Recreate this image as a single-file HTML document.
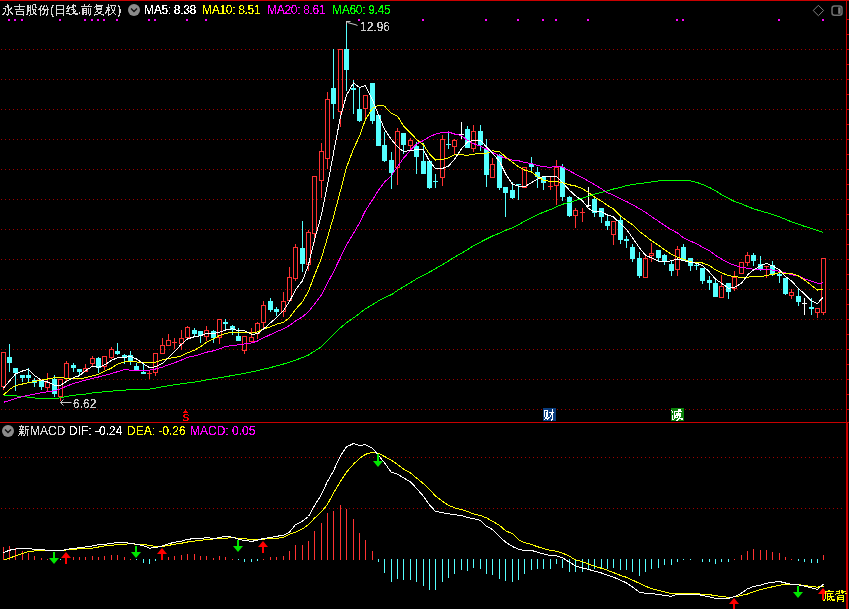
<!DOCTYPE html>
<html><head><meta charset="utf-8">
<style>
html,body{margin:0;padding:0;background:#000;}
body{width:849px;height:609px;overflow:hidden;position:relative;font-family:"Liberation Sans", sans-serif;}
svg{position:absolute;left:0;top:0;}
.t{position:absolute;white-space:pre;font-size:12px;line-height:20px;filter:url(#crisp);}
</style></head><body>
<svg width="849" height="609" viewBox="0 0 849 609" shape-rendering="crispEdges">
<defs><filter id="crisp" x="0" y="0" width="100%" height="100%"><feComponentTransfer><feFuncA type="discrete" tableValues="0 0 1 1 1"/></feComponentTransfer></filter><filter id="crispc" x="0" y="0" width="100%" height="100%"><feComponentTransfer><feFuncA type="discrete" tableValues="0 0 1 1 1"/></feComponentTransfer></filter></defs>
<path d="M1 49h1v1h-1zM5 49h1v1h-1zM9 49h1v1h-1zM13 49h1v1h-1zM17 49h1v1h-1zM21 49h1v1h-1zM25 49h1v1h-1zM29 49h1v1h-1zM33 49h1v1h-1zM37 49h1v1h-1zM41 49h1v1h-1zM45 49h1v1h-1zM49 49h1v1h-1zM53 49h1v1h-1zM57 49h1v1h-1zM61 49h1v1h-1zM65 49h1v1h-1zM69 49h1v1h-1zM73 49h1v1h-1zM77 49h1v1h-1zM81 49h1v1h-1zM85 49h1v1h-1zM89 49h1v1h-1zM93 49h1v1h-1zM97 49h1v1h-1zM101 49h1v1h-1zM105 49h1v1h-1zM109 49h1v1h-1zM113 49h1v1h-1zM117 49h1v1h-1zM121 49h1v1h-1zM125 49h1v1h-1zM129 49h1v1h-1zM133 49h1v1h-1zM137 49h1v1h-1zM141 49h1v1h-1zM145 49h1v1h-1zM149 49h1v1h-1zM153 49h1v1h-1zM157 49h1v1h-1zM161 49h1v1h-1zM165 49h1v1h-1zM169 49h1v1h-1zM173 49h1v1h-1zM177 49h1v1h-1zM181 49h1v1h-1zM185 49h1v1h-1zM189 49h1v1h-1zM193 49h1v1h-1zM197 49h1v1h-1zM201 49h1v1h-1zM205 49h1v1h-1zM209 49h1v1h-1zM213 49h1v1h-1zM217 49h1v1h-1zM221 49h1v1h-1zM225 49h1v1h-1zM229 49h1v1h-1zM233 49h1v1h-1zM237 49h1v1h-1zM241 49h1v1h-1zM245 49h1v1h-1zM249 49h1v1h-1zM253 49h1v1h-1zM257 49h1v1h-1zM261 49h1v1h-1zM265 49h1v1h-1zM269 49h1v1h-1zM273 49h1v1h-1zM277 49h1v1h-1zM281 49h1v1h-1zM285 49h1v1h-1zM289 49h1v1h-1zM293 49h1v1h-1zM297 49h1v1h-1zM301 49h1v1h-1zM305 49h1v1h-1zM309 49h1v1h-1zM313 49h1v1h-1zM317 49h1v1h-1zM321 49h1v1h-1zM325 49h1v1h-1zM329 49h1v1h-1zM333 49h1v1h-1zM337 49h1v1h-1zM341 49h1v1h-1zM345 49h1v1h-1zM349 49h1v1h-1zM353 49h1v1h-1zM357 49h1v1h-1zM361 49h1v1h-1zM365 49h1v1h-1zM369 49h1v1h-1zM373 49h1v1h-1zM377 49h1v1h-1zM381 49h1v1h-1zM385 49h1v1h-1zM389 49h1v1h-1zM393 49h1v1h-1zM397 49h1v1h-1zM401 49h1v1h-1zM405 49h1v1h-1zM409 49h1v1h-1zM413 49h1v1h-1zM417 49h1v1h-1zM421 49h1v1h-1zM425 49h1v1h-1zM429 49h1v1h-1zM433 49h1v1h-1zM437 49h1v1h-1zM441 49h1v1h-1zM445 49h1v1h-1zM449 49h1v1h-1zM453 49h1v1h-1zM457 49h1v1h-1zM461 49h1v1h-1zM465 49h1v1h-1zM469 49h1v1h-1zM473 49h1v1h-1zM477 49h1v1h-1zM481 49h1v1h-1zM485 49h1v1h-1zM489 49h1v1h-1zM493 49h1v1h-1zM497 49h1v1h-1zM501 49h1v1h-1zM505 49h1v1h-1zM509 49h1v1h-1zM513 49h1v1h-1zM517 49h1v1h-1zM521 49h1v1h-1zM525 49h1v1h-1zM529 49h1v1h-1zM533 49h1v1h-1zM537 49h1v1h-1zM541 49h1v1h-1zM545 49h1v1h-1zM549 49h1v1h-1zM553 49h1v1h-1zM557 49h1v1h-1zM561 49h1v1h-1zM565 49h1v1h-1zM569 49h1v1h-1zM573 49h1v1h-1zM577 49h1v1h-1zM581 49h1v1h-1zM585 49h1v1h-1zM589 49h1v1h-1zM593 49h1v1h-1zM597 49h1v1h-1zM601 49h1v1h-1zM605 49h1v1h-1zM609 49h1v1h-1zM613 49h1v1h-1zM617 49h1v1h-1zM621 49h1v1h-1zM625 49h1v1h-1zM629 49h1v1h-1zM633 49h1v1h-1zM637 49h1v1h-1zM641 49h1v1h-1zM645 49h1v1h-1zM649 49h1v1h-1zM653 49h1v1h-1zM657 49h1v1h-1zM661 49h1v1h-1zM665 49h1v1h-1zM669 49h1v1h-1zM673 49h1v1h-1zM677 49h1v1h-1zM681 49h1v1h-1zM685 49h1v1h-1zM689 49h1v1h-1zM693 49h1v1h-1zM697 49h1v1h-1zM701 49h1v1h-1zM705 49h1v1h-1zM709 49h1v1h-1zM713 49h1v1h-1zM717 49h1v1h-1zM721 49h1v1h-1zM725 49h1v1h-1zM729 49h1v1h-1zM733 49h1v1h-1zM737 49h1v1h-1zM741 49h1v1h-1zM745 49h1v1h-1zM749 49h1v1h-1zM753 49h1v1h-1zM757 49h1v1h-1zM761 49h1v1h-1zM765 49h1v1h-1zM769 49h1v1h-1zM773 49h1v1h-1zM777 49h1v1h-1zM781 49h1v1h-1zM785 49h1v1h-1zM789 49h1v1h-1zM793 49h1v1h-1zM797 49h1v1h-1zM801 49h1v1h-1zM805 49h1v1h-1zM809 49h1v1h-1zM813 49h1v1h-1zM817 49h1v1h-1zM821 49h1v1h-1zM825 49h1v1h-1zM829 49h1v1h-1zM833 49h1v1h-1zM837 49h1v1h-1zM841 49h1v1h-1zM1 79h1v1h-1zM5 79h1v1h-1zM9 79h1v1h-1zM13 79h1v1h-1zM17 79h1v1h-1zM21 79h1v1h-1zM25 79h1v1h-1zM29 79h1v1h-1zM33 79h1v1h-1zM37 79h1v1h-1zM41 79h1v1h-1zM45 79h1v1h-1zM49 79h1v1h-1zM53 79h1v1h-1zM57 79h1v1h-1zM61 79h1v1h-1zM65 79h1v1h-1zM69 79h1v1h-1zM73 79h1v1h-1zM77 79h1v1h-1zM81 79h1v1h-1zM85 79h1v1h-1zM89 79h1v1h-1zM93 79h1v1h-1zM97 79h1v1h-1zM101 79h1v1h-1zM105 79h1v1h-1zM109 79h1v1h-1zM113 79h1v1h-1zM117 79h1v1h-1zM121 79h1v1h-1zM125 79h1v1h-1zM129 79h1v1h-1zM133 79h1v1h-1zM137 79h1v1h-1zM141 79h1v1h-1zM145 79h1v1h-1zM149 79h1v1h-1zM153 79h1v1h-1zM157 79h1v1h-1zM161 79h1v1h-1zM165 79h1v1h-1zM169 79h1v1h-1zM173 79h1v1h-1zM177 79h1v1h-1zM181 79h1v1h-1zM185 79h1v1h-1zM189 79h1v1h-1zM193 79h1v1h-1zM197 79h1v1h-1zM201 79h1v1h-1zM205 79h1v1h-1zM209 79h1v1h-1zM213 79h1v1h-1zM217 79h1v1h-1zM221 79h1v1h-1zM225 79h1v1h-1zM229 79h1v1h-1zM233 79h1v1h-1zM237 79h1v1h-1zM241 79h1v1h-1zM245 79h1v1h-1zM249 79h1v1h-1zM253 79h1v1h-1zM257 79h1v1h-1zM261 79h1v1h-1zM265 79h1v1h-1zM269 79h1v1h-1zM273 79h1v1h-1zM277 79h1v1h-1zM281 79h1v1h-1zM285 79h1v1h-1zM289 79h1v1h-1zM293 79h1v1h-1zM297 79h1v1h-1zM301 79h1v1h-1zM305 79h1v1h-1zM309 79h1v1h-1zM313 79h1v1h-1zM317 79h1v1h-1zM321 79h1v1h-1zM325 79h1v1h-1zM329 79h1v1h-1zM333 79h1v1h-1zM337 79h1v1h-1zM341 79h1v1h-1zM345 79h1v1h-1zM349 79h1v1h-1zM353 79h1v1h-1zM357 79h1v1h-1zM361 79h1v1h-1zM365 79h1v1h-1zM369 79h1v1h-1zM373 79h1v1h-1zM377 79h1v1h-1zM381 79h1v1h-1zM385 79h1v1h-1zM389 79h1v1h-1zM393 79h1v1h-1zM397 79h1v1h-1zM401 79h1v1h-1zM405 79h1v1h-1zM409 79h1v1h-1zM413 79h1v1h-1zM417 79h1v1h-1zM421 79h1v1h-1zM425 79h1v1h-1zM429 79h1v1h-1zM433 79h1v1h-1zM437 79h1v1h-1zM441 79h1v1h-1zM445 79h1v1h-1zM449 79h1v1h-1zM453 79h1v1h-1zM457 79h1v1h-1zM461 79h1v1h-1zM465 79h1v1h-1zM469 79h1v1h-1zM473 79h1v1h-1zM477 79h1v1h-1zM481 79h1v1h-1zM485 79h1v1h-1zM489 79h1v1h-1zM493 79h1v1h-1zM497 79h1v1h-1zM501 79h1v1h-1zM505 79h1v1h-1zM509 79h1v1h-1zM513 79h1v1h-1zM517 79h1v1h-1zM521 79h1v1h-1zM525 79h1v1h-1zM529 79h1v1h-1zM533 79h1v1h-1zM537 79h1v1h-1zM541 79h1v1h-1zM545 79h1v1h-1zM549 79h1v1h-1zM553 79h1v1h-1zM557 79h1v1h-1zM561 79h1v1h-1zM565 79h1v1h-1zM569 79h1v1h-1zM573 79h1v1h-1zM577 79h1v1h-1zM581 79h1v1h-1zM585 79h1v1h-1zM589 79h1v1h-1zM593 79h1v1h-1zM597 79h1v1h-1zM601 79h1v1h-1zM605 79h1v1h-1zM609 79h1v1h-1zM613 79h1v1h-1zM617 79h1v1h-1zM621 79h1v1h-1zM625 79h1v1h-1zM629 79h1v1h-1zM633 79h1v1h-1zM637 79h1v1h-1zM641 79h1v1h-1zM645 79h1v1h-1zM649 79h1v1h-1zM653 79h1v1h-1zM657 79h1v1h-1zM661 79h1v1h-1zM665 79h1v1h-1zM669 79h1v1h-1zM673 79h1v1h-1zM677 79h1v1h-1zM681 79h1v1h-1zM685 79h1v1h-1zM689 79h1v1h-1zM693 79h1v1h-1zM697 79h1v1h-1zM701 79h1v1h-1zM705 79h1v1h-1zM709 79h1v1h-1zM713 79h1v1h-1zM717 79h1v1h-1zM721 79h1v1h-1zM725 79h1v1h-1zM729 79h1v1h-1zM733 79h1v1h-1zM737 79h1v1h-1zM741 79h1v1h-1zM745 79h1v1h-1zM749 79h1v1h-1zM753 79h1v1h-1zM757 79h1v1h-1zM761 79h1v1h-1zM765 79h1v1h-1zM769 79h1v1h-1zM773 79h1v1h-1zM777 79h1v1h-1zM781 79h1v1h-1zM785 79h1v1h-1zM789 79h1v1h-1zM793 79h1v1h-1zM797 79h1v1h-1zM801 79h1v1h-1zM805 79h1v1h-1zM809 79h1v1h-1zM813 79h1v1h-1zM817 79h1v1h-1zM821 79h1v1h-1zM825 79h1v1h-1zM829 79h1v1h-1zM833 79h1v1h-1zM837 79h1v1h-1zM841 79h1v1h-1zM1 109h1v1h-1zM5 109h1v1h-1zM9 109h1v1h-1zM13 109h1v1h-1zM17 109h1v1h-1zM21 109h1v1h-1zM25 109h1v1h-1zM29 109h1v1h-1zM33 109h1v1h-1zM37 109h1v1h-1zM41 109h1v1h-1zM45 109h1v1h-1zM49 109h1v1h-1zM53 109h1v1h-1zM57 109h1v1h-1zM61 109h1v1h-1zM65 109h1v1h-1zM69 109h1v1h-1zM73 109h1v1h-1zM77 109h1v1h-1zM81 109h1v1h-1zM85 109h1v1h-1zM89 109h1v1h-1zM93 109h1v1h-1zM97 109h1v1h-1zM101 109h1v1h-1zM105 109h1v1h-1zM109 109h1v1h-1zM113 109h1v1h-1zM117 109h1v1h-1zM121 109h1v1h-1zM125 109h1v1h-1zM129 109h1v1h-1zM133 109h1v1h-1zM137 109h1v1h-1zM141 109h1v1h-1zM145 109h1v1h-1zM149 109h1v1h-1zM153 109h1v1h-1zM157 109h1v1h-1zM161 109h1v1h-1zM165 109h1v1h-1zM169 109h1v1h-1zM173 109h1v1h-1zM177 109h1v1h-1zM181 109h1v1h-1zM185 109h1v1h-1zM189 109h1v1h-1zM193 109h1v1h-1zM197 109h1v1h-1zM201 109h1v1h-1zM205 109h1v1h-1zM209 109h1v1h-1zM213 109h1v1h-1zM217 109h1v1h-1zM221 109h1v1h-1zM225 109h1v1h-1zM229 109h1v1h-1zM233 109h1v1h-1zM237 109h1v1h-1zM241 109h1v1h-1zM245 109h1v1h-1zM249 109h1v1h-1zM253 109h1v1h-1zM257 109h1v1h-1zM261 109h1v1h-1zM265 109h1v1h-1zM269 109h1v1h-1zM273 109h1v1h-1zM277 109h1v1h-1zM281 109h1v1h-1zM285 109h1v1h-1zM289 109h1v1h-1zM293 109h1v1h-1zM297 109h1v1h-1zM301 109h1v1h-1zM305 109h1v1h-1zM309 109h1v1h-1zM313 109h1v1h-1zM317 109h1v1h-1zM321 109h1v1h-1zM325 109h1v1h-1zM329 109h1v1h-1zM333 109h1v1h-1zM337 109h1v1h-1zM341 109h1v1h-1zM345 109h1v1h-1zM349 109h1v1h-1zM353 109h1v1h-1zM357 109h1v1h-1zM361 109h1v1h-1zM365 109h1v1h-1zM369 109h1v1h-1zM373 109h1v1h-1zM377 109h1v1h-1zM381 109h1v1h-1zM385 109h1v1h-1zM389 109h1v1h-1zM393 109h1v1h-1zM397 109h1v1h-1zM401 109h1v1h-1zM405 109h1v1h-1zM409 109h1v1h-1zM413 109h1v1h-1zM417 109h1v1h-1zM421 109h1v1h-1zM425 109h1v1h-1zM429 109h1v1h-1zM433 109h1v1h-1zM437 109h1v1h-1zM441 109h1v1h-1zM445 109h1v1h-1zM449 109h1v1h-1zM453 109h1v1h-1zM457 109h1v1h-1zM461 109h1v1h-1zM465 109h1v1h-1zM469 109h1v1h-1zM473 109h1v1h-1zM477 109h1v1h-1zM481 109h1v1h-1zM485 109h1v1h-1zM489 109h1v1h-1zM493 109h1v1h-1zM497 109h1v1h-1zM501 109h1v1h-1zM505 109h1v1h-1zM509 109h1v1h-1zM513 109h1v1h-1zM517 109h1v1h-1zM521 109h1v1h-1zM525 109h1v1h-1zM529 109h1v1h-1zM533 109h1v1h-1zM537 109h1v1h-1zM541 109h1v1h-1zM545 109h1v1h-1zM549 109h1v1h-1zM553 109h1v1h-1zM557 109h1v1h-1zM561 109h1v1h-1zM565 109h1v1h-1zM569 109h1v1h-1zM573 109h1v1h-1zM577 109h1v1h-1zM581 109h1v1h-1zM585 109h1v1h-1zM589 109h1v1h-1zM593 109h1v1h-1zM597 109h1v1h-1zM601 109h1v1h-1zM605 109h1v1h-1zM609 109h1v1h-1zM613 109h1v1h-1zM617 109h1v1h-1zM621 109h1v1h-1zM625 109h1v1h-1zM629 109h1v1h-1zM633 109h1v1h-1zM637 109h1v1h-1zM641 109h1v1h-1zM645 109h1v1h-1zM649 109h1v1h-1zM653 109h1v1h-1zM657 109h1v1h-1zM661 109h1v1h-1zM665 109h1v1h-1zM669 109h1v1h-1zM673 109h1v1h-1zM677 109h1v1h-1zM681 109h1v1h-1zM685 109h1v1h-1zM689 109h1v1h-1zM693 109h1v1h-1zM697 109h1v1h-1zM701 109h1v1h-1zM705 109h1v1h-1zM709 109h1v1h-1zM713 109h1v1h-1zM717 109h1v1h-1zM721 109h1v1h-1zM725 109h1v1h-1zM729 109h1v1h-1zM733 109h1v1h-1zM737 109h1v1h-1zM741 109h1v1h-1zM745 109h1v1h-1zM749 109h1v1h-1zM753 109h1v1h-1zM757 109h1v1h-1zM761 109h1v1h-1zM765 109h1v1h-1zM769 109h1v1h-1zM773 109h1v1h-1zM777 109h1v1h-1zM781 109h1v1h-1zM785 109h1v1h-1zM789 109h1v1h-1zM793 109h1v1h-1zM797 109h1v1h-1zM801 109h1v1h-1zM805 109h1v1h-1zM809 109h1v1h-1zM813 109h1v1h-1zM817 109h1v1h-1zM821 109h1v1h-1zM825 109h1v1h-1zM829 109h1v1h-1zM833 109h1v1h-1zM837 109h1v1h-1zM841 109h1v1h-1zM1 139h1v1h-1zM5 139h1v1h-1zM9 139h1v1h-1zM13 139h1v1h-1zM17 139h1v1h-1zM21 139h1v1h-1zM25 139h1v1h-1zM29 139h1v1h-1zM33 139h1v1h-1zM37 139h1v1h-1zM41 139h1v1h-1zM45 139h1v1h-1zM49 139h1v1h-1zM53 139h1v1h-1zM57 139h1v1h-1zM61 139h1v1h-1zM65 139h1v1h-1zM69 139h1v1h-1zM73 139h1v1h-1zM77 139h1v1h-1zM81 139h1v1h-1zM85 139h1v1h-1zM89 139h1v1h-1zM93 139h1v1h-1zM97 139h1v1h-1zM101 139h1v1h-1zM105 139h1v1h-1zM109 139h1v1h-1zM113 139h1v1h-1zM117 139h1v1h-1zM121 139h1v1h-1zM125 139h1v1h-1zM129 139h1v1h-1zM133 139h1v1h-1zM137 139h1v1h-1zM141 139h1v1h-1zM145 139h1v1h-1zM149 139h1v1h-1zM153 139h1v1h-1zM157 139h1v1h-1zM161 139h1v1h-1zM165 139h1v1h-1zM169 139h1v1h-1zM173 139h1v1h-1zM177 139h1v1h-1zM181 139h1v1h-1zM185 139h1v1h-1zM189 139h1v1h-1zM193 139h1v1h-1zM197 139h1v1h-1zM201 139h1v1h-1zM205 139h1v1h-1zM209 139h1v1h-1zM213 139h1v1h-1zM217 139h1v1h-1zM221 139h1v1h-1zM225 139h1v1h-1zM229 139h1v1h-1zM233 139h1v1h-1zM237 139h1v1h-1zM241 139h1v1h-1zM245 139h1v1h-1zM249 139h1v1h-1zM253 139h1v1h-1zM257 139h1v1h-1zM261 139h1v1h-1zM265 139h1v1h-1zM269 139h1v1h-1zM273 139h1v1h-1zM277 139h1v1h-1zM281 139h1v1h-1zM285 139h1v1h-1zM289 139h1v1h-1zM293 139h1v1h-1zM297 139h1v1h-1zM301 139h1v1h-1zM305 139h1v1h-1zM309 139h1v1h-1zM313 139h1v1h-1zM317 139h1v1h-1zM321 139h1v1h-1zM325 139h1v1h-1zM329 139h1v1h-1zM333 139h1v1h-1zM337 139h1v1h-1zM341 139h1v1h-1zM345 139h1v1h-1zM349 139h1v1h-1zM353 139h1v1h-1zM357 139h1v1h-1zM361 139h1v1h-1zM365 139h1v1h-1zM369 139h1v1h-1zM373 139h1v1h-1zM377 139h1v1h-1zM381 139h1v1h-1zM385 139h1v1h-1zM389 139h1v1h-1zM393 139h1v1h-1zM397 139h1v1h-1zM401 139h1v1h-1zM405 139h1v1h-1zM409 139h1v1h-1zM413 139h1v1h-1zM417 139h1v1h-1zM421 139h1v1h-1zM425 139h1v1h-1zM429 139h1v1h-1zM433 139h1v1h-1zM437 139h1v1h-1zM441 139h1v1h-1zM445 139h1v1h-1zM449 139h1v1h-1zM453 139h1v1h-1zM457 139h1v1h-1zM461 139h1v1h-1zM465 139h1v1h-1zM469 139h1v1h-1zM473 139h1v1h-1zM477 139h1v1h-1zM481 139h1v1h-1zM485 139h1v1h-1zM489 139h1v1h-1zM493 139h1v1h-1zM497 139h1v1h-1zM501 139h1v1h-1zM505 139h1v1h-1zM509 139h1v1h-1zM513 139h1v1h-1zM517 139h1v1h-1zM521 139h1v1h-1zM525 139h1v1h-1zM529 139h1v1h-1zM533 139h1v1h-1zM537 139h1v1h-1zM541 139h1v1h-1zM545 139h1v1h-1zM549 139h1v1h-1zM553 139h1v1h-1zM557 139h1v1h-1zM561 139h1v1h-1zM565 139h1v1h-1zM569 139h1v1h-1zM573 139h1v1h-1zM577 139h1v1h-1zM581 139h1v1h-1zM585 139h1v1h-1zM589 139h1v1h-1zM593 139h1v1h-1zM597 139h1v1h-1zM601 139h1v1h-1zM605 139h1v1h-1zM609 139h1v1h-1zM613 139h1v1h-1zM617 139h1v1h-1zM621 139h1v1h-1zM625 139h1v1h-1zM629 139h1v1h-1zM633 139h1v1h-1zM637 139h1v1h-1zM641 139h1v1h-1zM645 139h1v1h-1zM649 139h1v1h-1zM653 139h1v1h-1zM657 139h1v1h-1zM661 139h1v1h-1zM665 139h1v1h-1zM669 139h1v1h-1zM673 139h1v1h-1zM677 139h1v1h-1zM681 139h1v1h-1zM685 139h1v1h-1zM689 139h1v1h-1zM693 139h1v1h-1zM697 139h1v1h-1zM701 139h1v1h-1zM705 139h1v1h-1zM709 139h1v1h-1zM713 139h1v1h-1zM717 139h1v1h-1zM721 139h1v1h-1zM725 139h1v1h-1zM729 139h1v1h-1zM733 139h1v1h-1zM737 139h1v1h-1zM741 139h1v1h-1zM745 139h1v1h-1zM749 139h1v1h-1zM753 139h1v1h-1zM757 139h1v1h-1zM761 139h1v1h-1zM765 139h1v1h-1zM769 139h1v1h-1zM773 139h1v1h-1zM777 139h1v1h-1zM781 139h1v1h-1zM785 139h1v1h-1zM789 139h1v1h-1zM793 139h1v1h-1zM797 139h1v1h-1zM801 139h1v1h-1zM805 139h1v1h-1zM809 139h1v1h-1zM813 139h1v1h-1zM817 139h1v1h-1zM821 139h1v1h-1zM825 139h1v1h-1zM829 139h1v1h-1zM833 139h1v1h-1zM837 139h1v1h-1zM841 139h1v1h-1zM1 169h1v1h-1zM5 169h1v1h-1zM9 169h1v1h-1zM13 169h1v1h-1zM17 169h1v1h-1zM21 169h1v1h-1zM25 169h1v1h-1zM29 169h1v1h-1zM33 169h1v1h-1zM37 169h1v1h-1zM41 169h1v1h-1zM45 169h1v1h-1zM49 169h1v1h-1zM53 169h1v1h-1zM57 169h1v1h-1zM61 169h1v1h-1zM65 169h1v1h-1zM69 169h1v1h-1zM73 169h1v1h-1zM77 169h1v1h-1zM81 169h1v1h-1zM85 169h1v1h-1zM89 169h1v1h-1zM93 169h1v1h-1zM97 169h1v1h-1zM101 169h1v1h-1zM105 169h1v1h-1zM109 169h1v1h-1zM113 169h1v1h-1zM117 169h1v1h-1zM121 169h1v1h-1zM125 169h1v1h-1zM129 169h1v1h-1zM133 169h1v1h-1zM137 169h1v1h-1zM141 169h1v1h-1zM145 169h1v1h-1zM149 169h1v1h-1zM153 169h1v1h-1zM157 169h1v1h-1zM161 169h1v1h-1zM165 169h1v1h-1zM169 169h1v1h-1zM173 169h1v1h-1zM177 169h1v1h-1zM181 169h1v1h-1zM185 169h1v1h-1zM189 169h1v1h-1zM193 169h1v1h-1zM197 169h1v1h-1zM201 169h1v1h-1zM205 169h1v1h-1zM209 169h1v1h-1zM213 169h1v1h-1zM217 169h1v1h-1zM221 169h1v1h-1zM225 169h1v1h-1zM229 169h1v1h-1zM233 169h1v1h-1zM237 169h1v1h-1zM241 169h1v1h-1zM245 169h1v1h-1zM249 169h1v1h-1zM253 169h1v1h-1zM257 169h1v1h-1zM261 169h1v1h-1zM265 169h1v1h-1zM269 169h1v1h-1zM273 169h1v1h-1zM277 169h1v1h-1zM281 169h1v1h-1zM285 169h1v1h-1zM289 169h1v1h-1zM293 169h1v1h-1zM297 169h1v1h-1zM301 169h1v1h-1zM305 169h1v1h-1zM309 169h1v1h-1zM313 169h1v1h-1zM317 169h1v1h-1zM321 169h1v1h-1zM325 169h1v1h-1zM329 169h1v1h-1zM333 169h1v1h-1zM337 169h1v1h-1zM341 169h1v1h-1zM345 169h1v1h-1zM349 169h1v1h-1zM353 169h1v1h-1zM357 169h1v1h-1zM361 169h1v1h-1zM365 169h1v1h-1zM369 169h1v1h-1zM373 169h1v1h-1zM377 169h1v1h-1zM381 169h1v1h-1zM385 169h1v1h-1zM389 169h1v1h-1zM393 169h1v1h-1zM397 169h1v1h-1zM401 169h1v1h-1zM405 169h1v1h-1zM409 169h1v1h-1zM413 169h1v1h-1zM417 169h1v1h-1zM421 169h1v1h-1zM425 169h1v1h-1zM429 169h1v1h-1zM433 169h1v1h-1zM437 169h1v1h-1zM441 169h1v1h-1zM445 169h1v1h-1zM449 169h1v1h-1zM453 169h1v1h-1zM457 169h1v1h-1zM461 169h1v1h-1zM465 169h1v1h-1zM469 169h1v1h-1zM473 169h1v1h-1zM477 169h1v1h-1zM481 169h1v1h-1zM485 169h1v1h-1zM489 169h1v1h-1zM493 169h1v1h-1zM497 169h1v1h-1zM501 169h1v1h-1zM505 169h1v1h-1zM509 169h1v1h-1zM513 169h1v1h-1zM517 169h1v1h-1zM521 169h1v1h-1zM525 169h1v1h-1zM529 169h1v1h-1zM533 169h1v1h-1zM537 169h1v1h-1zM541 169h1v1h-1zM545 169h1v1h-1zM549 169h1v1h-1zM553 169h1v1h-1zM557 169h1v1h-1zM561 169h1v1h-1zM565 169h1v1h-1zM569 169h1v1h-1zM573 169h1v1h-1zM577 169h1v1h-1zM581 169h1v1h-1zM585 169h1v1h-1zM589 169h1v1h-1zM593 169h1v1h-1zM597 169h1v1h-1zM601 169h1v1h-1zM605 169h1v1h-1zM609 169h1v1h-1zM613 169h1v1h-1zM617 169h1v1h-1zM621 169h1v1h-1zM625 169h1v1h-1zM629 169h1v1h-1zM633 169h1v1h-1zM637 169h1v1h-1zM641 169h1v1h-1zM645 169h1v1h-1zM649 169h1v1h-1zM653 169h1v1h-1zM657 169h1v1h-1zM661 169h1v1h-1zM665 169h1v1h-1zM669 169h1v1h-1zM673 169h1v1h-1zM677 169h1v1h-1zM681 169h1v1h-1zM685 169h1v1h-1zM689 169h1v1h-1zM693 169h1v1h-1zM697 169h1v1h-1zM701 169h1v1h-1zM705 169h1v1h-1zM709 169h1v1h-1zM713 169h1v1h-1zM717 169h1v1h-1zM721 169h1v1h-1zM725 169h1v1h-1zM729 169h1v1h-1zM733 169h1v1h-1zM737 169h1v1h-1zM741 169h1v1h-1zM745 169h1v1h-1zM749 169h1v1h-1zM753 169h1v1h-1zM757 169h1v1h-1zM761 169h1v1h-1zM765 169h1v1h-1zM769 169h1v1h-1zM773 169h1v1h-1zM777 169h1v1h-1zM781 169h1v1h-1zM785 169h1v1h-1zM789 169h1v1h-1zM793 169h1v1h-1zM797 169h1v1h-1zM801 169h1v1h-1zM805 169h1v1h-1zM809 169h1v1h-1zM813 169h1v1h-1zM817 169h1v1h-1zM821 169h1v1h-1zM825 169h1v1h-1zM829 169h1v1h-1zM833 169h1v1h-1zM837 169h1v1h-1zM841 169h1v1h-1zM1 199h1v1h-1zM5 199h1v1h-1zM9 199h1v1h-1zM13 199h1v1h-1zM17 199h1v1h-1zM21 199h1v1h-1zM25 199h1v1h-1zM29 199h1v1h-1zM33 199h1v1h-1zM37 199h1v1h-1zM41 199h1v1h-1zM45 199h1v1h-1zM49 199h1v1h-1zM53 199h1v1h-1zM57 199h1v1h-1zM61 199h1v1h-1zM65 199h1v1h-1zM69 199h1v1h-1zM73 199h1v1h-1zM77 199h1v1h-1zM81 199h1v1h-1zM85 199h1v1h-1zM89 199h1v1h-1zM93 199h1v1h-1zM97 199h1v1h-1zM101 199h1v1h-1zM105 199h1v1h-1zM109 199h1v1h-1zM113 199h1v1h-1zM117 199h1v1h-1zM121 199h1v1h-1zM125 199h1v1h-1zM129 199h1v1h-1zM133 199h1v1h-1zM137 199h1v1h-1zM141 199h1v1h-1zM145 199h1v1h-1zM149 199h1v1h-1zM153 199h1v1h-1zM157 199h1v1h-1zM161 199h1v1h-1zM165 199h1v1h-1zM169 199h1v1h-1zM173 199h1v1h-1zM177 199h1v1h-1zM181 199h1v1h-1zM185 199h1v1h-1zM189 199h1v1h-1zM193 199h1v1h-1zM197 199h1v1h-1zM201 199h1v1h-1zM205 199h1v1h-1zM209 199h1v1h-1zM213 199h1v1h-1zM217 199h1v1h-1zM221 199h1v1h-1zM225 199h1v1h-1zM229 199h1v1h-1zM233 199h1v1h-1zM237 199h1v1h-1zM241 199h1v1h-1zM245 199h1v1h-1zM249 199h1v1h-1zM253 199h1v1h-1zM257 199h1v1h-1zM261 199h1v1h-1zM265 199h1v1h-1zM269 199h1v1h-1zM273 199h1v1h-1zM277 199h1v1h-1zM281 199h1v1h-1zM285 199h1v1h-1zM289 199h1v1h-1zM293 199h1v1h-1zM297 199h1v1h-1zM301 199h1v1h-1zM305 199h1v1h-1zM309 199h1v1h-1zM313 199h1v1h-1zM317 199h1v1h-1zM321 199h1v1h-1zM325 199h1v1h-1zM329 199h1v1h-1zM333 199h1v1h-1zM337 199h1v1h-1zM341 199h1v1h-1zM345 199h1v1h-1zM349 199h1v1h-1zM353 199h1v1h-1zM357 199h1v1h-1zM361 199h1v1h-1zM365 199h1v1h-1zM369 199h1v1h-1zM373 199h1v1h-1zM377 199h1v1h-1zM381 199h1v1h-1zM385 199h1v1h-1zM389 199h1v1h-1zM393 199h1v1h-1zM397 199h1v1h-1zM401 199h1v1h-1zM405 199h1v1h-1zM409 199h1v1h-1zM413 199h1v1h-1zM417 199h1v1h-1zM421 199h1v1h-1zM425 199h1v1h-1zM429 199h1v1h-1zM433 199h1v1h-1zM437 199h1v1h-1zM441 199h1v1h-1zM445 199h1v1h-1zM449 199h1v1h-1zM453 199h1v1h-1zM457 199h1v1h-1zM461 199h1v1h-1zM465 199h1v1h-1zM469 199h1v1h-1zM473 199h1v1h-1zM477 199h1v1h-1zM481 199h1v1h-1zM485 199h1v1h-1zM489 199h1v1h-1zM493 199h1v1h-1zM497 199h1v1h-1zM501 199h1v1h-1zM505 199h1v1h-1zM509 199h1v1h-1zM513 199h1v1h-1zM517 199h1v1h-1zM521 199h1v1h-1zM525 199h1v1h-1zM529 199h1v1h-1zM533 199h1v1h-1zM537 199h1v1h-1zM541 199h1v1h-1zM545 199h1v1h-1zM549 199h1v1h-1zM553 199h1v1h-1zM557 199h1v1h-1zM561 199h1v1h-1zM565 199h1v1h-1zM569 199h1v1h-1zM573 199h1v1h-1zM577 199h1v1h-1zM581 199h1v1h-1zM585 199h1v1h-1zM589 199h1v1h-1zM593 199h1v1h-1zM597 199h1v1h-1zM601 199h1v1h-1zM605 199h1v1h-1zM609 199h1v1h-1zM613 199h1v1h-1zM617 199h1v1h-1zM621 199h1v1h-1zM625 199h1v1h-1zM629 199h1v1h-1zM633 199h1v1h-1zM637 199h1v1h-1zM641 199h1v1h-1zM645 199h1v1h-1zM649 199h1v1h-1zM653 199h1v1h-1zM657 199h1v1h-1zM661 199h1v1h-1zM665 199h1v1h-1zM669 199h1v1h-1zM673 199h1v1h-1zM677 199h1v1h-1zM681 199h1v1h-1zM685 199h1v1h-1zM689 199h1v1h-1zM693 199h1v1h-1zM697 199h1v1h-1zM701 199h1v1h-1zM705 199h1v1h-1zM709 199h1v1h-1zM713 199h1v1h-1zM717 199h1v1h-1zM721 199h1v1h-1zM725 199h1v1h-1zM729 199h1v1h-1zM733 199h1v1h-1zM737 199h1v1h-1zM741 199h1v1h-1zM745 199h1v1h-1zM749 199h1v1h-1zM753 199h1v1h-1zM757 199h1v1h-1zM761 199h1v1h-1zM765 199h1v1h-1zM769 199h1v1h-1zM773 199h1v1h-1zM777 199h1v1h-1zM781 199h1v1h-1zM785 199h1v1h-1zM789 199h1v1h-1zM793 199h1v1h-1zM797 199h1v1h-1zM801 199h1v1h-1zM805 199h1v1h-1zM809 199h1v1h-1zM813 199h1v1h-1zM817 199h1v1h-1zM821 199h1v1h-1zM825 199h1v1h-1zM829 199h1v1h-1zM833 199h1v1h-1zM837 199h1v1h-1zM841 199h1v1h-1zM1 229h1v1h-1zM5 229h1v1h-1zM9 229h1v1h-1zM13 229h1v1h-1zM17 229h1v1h-1zM21 229h1v1h-1zM25 229h1v1h-1zM29 229h1v1h-1zM33 229h1v1h-1zM37 229h1v1h-1zM41 229h1v1h-1zM45 229h1v1h-1zM49 229h1v1h-1zM53 229h1v1h-1zM57 229h1v1h-1zM61 229h1v1h-1zM65 229h1v1h-1zM69 229h1v1h-1zM73 229h1v1h-1zM77 229h1v1h-1zM81 229h1v1h-1zM85 229h1v1h-1zM89 229h1v1h-1zM93 229h1v1h-1zM97 229h1v1h-1zM101 229h1v1h-1zM105 229h1v1h-1zM109 229h1v1h-1zM113 229h1v1h-1zM117 229h1v1h-1zM121 229h1v1h-1zM125 229h1v1h-1zM129 229h1v1h-1zM133 229h1v1h-1zM137 229h1v1h-1zM141 229h1v1h-1zM145 229h1v1h-1zM149 229h1v1h-1zM153 229h1v1h-1zM157 229h1v1h-1zM161 229h1v1h-1zM165 229h1v1h-1zM169 229h1v1h-1zM173 229h1v1h-1zM177 229h1v1h-1zM181 229h1v1h-1zM185 229h1v1h-1zM189 229h1v1h-1zM193 229h1v1h-1zM197 229h1v1h-1zM201 229h1v1h-1zM205 229h1v1h-1zM209 229h1v1h-1zM213 229h1v1h-1zM217 229h1v1h-1zM221 229h1v1h-1zM225 229h1v1h-1zM229 229h1v1h-1zM233 229h1v1h-1zM237 229h1v1h-1zM241 229h1v1h-1zM245 229h1v1h-1zM249 229h1v1h-1zM253 229h1v1h-1zM257 229h1v1h-1zM261 229h1v1h-1zM265 229h1v1h-1zM269 229h1v1h-1zM273 229h1v1h-1zM277 229h1v1h-1zM281 229h1v1h-1zM285 229h1v1h-1zM289 229h1v1h-1zM293 229h1v1h-1zM297 229h1v1h-1zM301 229h1v1h-1zM305 229h1v1h-1zM309 229h1v1h-1zM313 229h1v1h-1zM317 229h1v1h-1zM321 229h1v1h-1zM325 229h1v1h-1zM329 229h1v1h-1zM333 229h1v1h-1zM337 229h1v1h-1zM341 229h1v1h-1zM345 229h1v1h-1zM349 229h1v1h-1zM353 229h1v1h-1zM357 229h1v1h-1zM361 229h1v1h-1zM365 229h1v1h-1zM369 229h1v1h-1zM373 229h1v1h-1zM377 229h1v1h-1zM381 229h1v1h-1zM385 229h1v1h-1zM389 229h1v1h-1zM393 229h1v1h-1zM397 229h1v1h-1zM401 229h1v1h-1zM405 229h1v1h-1zM409 229h1v1h-1zM413 229h1v1h-1zM417 229h1v1h-1zM421 229h1v1h-1zM425 229h1v1h-1zM429 229h1v1h-1zM433 229h1v1h-1zM437 229h1v1h-1zM441 229h1v1h-1zM445 229h1v1h-1zM449 229h1v1h-1zM453 229h1v1h-1zM457 229h1v1h-1zM461 229h1v1h-1zM465 229h1v1h-1zM469 229h1v1h-1zM473 229h1v1h-1zM477 229h1v1h-1zM481 229h1v1h-1zM485 229h1v1h-1zM489 229h1v1h-1zM493 229h1v1h-1zM497 229h1v1h-1zM501 229h1v1h-1zM505 229h1v1h-1zM509 229h1v1h-1zM513 229h1v1h-1zM517 229h1v1h-1zM521 229h1v1h-1zM525 229h1v1h-1zM529 229h1v1h-1zM533 229h1v1h-1zM537 229h1v1h-1zM541 229h1v1h-1zM545 229h1v1h-1zM549 229h1v1h-1zM553 229h1v1h-1zM557 229h1v1h-1zM561 229h1v1h-1zM565 229h1v1h-1zM569 229h1v1h-1zM573 229h1v1h-1zM577 229h1v1h-1zM581 229h1v1h-1zM585 229h1v1h-1zM589 229h1v1h-1zM593 229h1v1h-1zM597 229h1v1h-1zM601 229h1v1h-1zM605 229h1v1h-1zM609 229h1v1h-1zM613 229h1v1h-1zM617 229h1v1h-1zM621 229h1v1h-1zM625 229h1v1h-1zM629 229h1v1h-1zM633 229h1v1h-1zM637 229h1v1h-1zM641 229h1v1h-1zM645 229h1v1h-1zM649 229h1v1h-1zM653 229h1v1h-1zM657 229h1v1h-1zM661 229h1v1h-1zM665 229h1v1h-1zM669 229h1v1h-1zM673 229h1v1h-1zM677 229h1v1h-1zM681 229h1v1h-1zM685 229h1v1h-1zM689 229h1v1h-1zM693 229h1v1h-1zM697 229h1v1h-1zM701 229h1v1h-1zM705 229h1v1h-1zM709 229h1v1h-1zM713 229h1v1h-1zM717 229h1v1h-1zM721 229h1v1h-1zM725 229h1v1h-1zM729 229h1v1h-1zM733 229h1v1h-1zM737 229h1v1h-1zM741 229h1v1h-1zM745 229h1v1h-1zM749 229h1v1h-1zM753 229h1v1h-1zM757 229h1v1h-1zM761 229h1v1h-1zM765 229h1v1h-1zM769 229h1v1h-1zM773 229h1v1h-1zM777 229h1v1h-1zM781 229h1v1h-1zM785 229h1v1h-1zM789 229h1v1h-1zM793 229h1v1h-1zM797 229h1v1h-1zM801 229h1v1h-1zM805 229h1v1h-1zM809 229h1v1h-1zM813 229h1v1h-1zM817 229h1v1h-1zM821 229h1v1h-1zM825 229h1v1h-1zM829 229h1v1h-1zM833 229h1v1h-1zM837 229h1v1h-1zM841 229h1v1h-1zM1 259h1v1h-1zM5 259h1v1h-1zM9 259h1v1h-1zM13 259h1v1h-1zM17 259h1v1h-1zM21 259h1v1h-1zM25 259h1v1h-1zM29 259h1v1h-1zM33 259h1v1h-1zM37 259h1v1h-1zM41 259h1v1h-1zM45 259h1v1h-1zM49 259h1v1h-1zM53 259h1v1h-1zM57 259h1v1h-1zM61 259h1v1h-1zM65 259h1v1h-1zM69 259h1v1h-1zM73 259h1v1h-1zM77 259h1v1h-1zM81 259h1v1h-1zM85 259h1v1h-1zM89 259h1v1h-1zM93 259h1v1h-1zM97 259h1v1h-1zM101 259h1v1h-1zM105 259h1v1h-1zM109 259h1v1h-1zM113 259h1v1h-1zM117 259h1v1h-1zM121 259h1v1h-1zM125 259h1v1h-1zM129 259h1v1h-1zM133 259h1v1h-1zM137 259h1v1h-1zM141 259h1v1h-1zM145 259h1v1h-1zM149 259h1v1h-1zM153 259h1v1h-1zM157 259h1v1h-1zM161 259h1v1h-1zM165 259h1v1h-1zM169 259h1v1h-1zM173 259h1v1h-1zM177 259h1v1h-1zM181 259h1v1h-1zM185 259h1v1h-1zM189 259h1v1h-1zM193 259h1v1h-1zM197 259h1v1h-1zM201 259h1v1h-1zM205 259h1v1h-1zM209 259h1v1h-1zM213 259h1v1h-1zM217 259h1v1h-1zM221 259h1v1h-1zM225 259h1v1h-1zM229 259h1v1h-1zM233 259h1v1h-1zM237 259h1v1h-1zM241 259h1v1h-1zM245 259h1v1h-1zM249 259h1v1h-1zM253 259h1v1h-1zM257 259h1v1h-1zM261 259h1v1h-1zM265 259h1v1h-1zM269 259h1v1h-1zM273 259h1v1h-1zM277 259h1v1h-1zM281 259h1v1h-1zM285 259h1v1h-1zM289 259h1v1h-1zM293 259h1v1h-1zM297 259h1v1h-1zM301 259h1v1h-1zM305 259h1v1h-1zM309 259h1v1h-1zM313 259h1v1h-1zM317 259h1v1h-1zM321 259h1v1h-1zM325 259h1v1h-1zM329 259h1v1h-1zM333 259h1v1h-1zM337 259h1v1h-1zM341 259h1v1h-1zM345 259h1v1h-1zM349 259h1v1h-1zM353 259h1v1h-1zM357 259h1v1h-1zM361 259h1v1h-1zM365 259h1v1h-1zM369 259h1v1h-1zM373 259h1v1h-1zM377 259h1v1h-1zM381 259h1v1h-1zM385 259h1v1h-1zM389 259h1v1h-1zM393 259h1v1h-1zM397 259h1v1h-1zM401 259h1v1h-1zM405 259h1v1h-1zM409 259h1v1h-1zM413 259h1v1h-1zM417 259h1v1h-1zM421 259h1v1h-1zM425 259h1v1h-1zM429 259h1v1h-1zM433 259h1v1h-1zM437 259h1v1h-1zM441 259h1v1h-1zM445 259h1v1h-1zM449 259h1v1h-1zM453 259h1v1h-1zM457 259h1v1h-1zM461 259h1v1h-1zM465 259h1v1h-1zM469 259h1v1h-1zM473 259h1v1h-1zM477 259h1v1h-1zM481 259h1v1h-1zM485 259h1v1h-1zM489 259h1v1h-1zM493 259h1v1h-1zM497 259h1v1h-1zM501 259h1v1h-1zM505 259h1v1h-1zM509 259h1v1h-1zM513 259h1v1h-1zM517 259h1v1h-1zM521 259h1v1h-1zM525 259h1v1h-1zM529 259h1v1h-1zM533 259h1v1h-1zM537 259h1v1h-1zM541 259h1v1h-1zM545 259h1v1h-1zM549 259h1v1h-1zM553 259h1v1h-1zM557 259h1v1h-1zM561 259h1v1h-1zM565 259h1v1h-1zM569 259h1v1h-1zM573 259h1v1h-1zM577 259h1v1h-1zM581 259h1v1h-1zM585 259h1v1h-1zM589 259h1v1h-1zM593 259h1v1h-1zM597 259h1v1h-1zM601 259h1v1h-1zM605 259h1v1h-1zM609 259h1v1h-1zM613 259h1v1h-1zM617 259h1v1h-1zM621 259h1v1h-1zM625 259h1v1h-1zM629 259h1v1h-1zM633 259h1v1h-1zM637 259h1v1h-1zM641 259h1v1h-1zM645 259h1v1h-1zM649 259h1v1h-1zM653 259h1v1h-1zM657 259h1v1h-1zM661 259h1v1h-1zM665 259h1v1h-1zM669 259h1v1h-1zM673 259h1v1h-1zM677 259h1v1h-1zM681 259h1v1h-1zM685 259h1v1h-1zM689 259h1v1h-1zM693 259h1v1h-1zM697 259h1v1h-1zM701 259h1v1h-1zM705 259h1v1h-1zM709 259h1v1h-1zM713 259h1v1h-1zM717 259h1v1h-1zM721 259h1v1h-1zM725 259h1v1h-1zM729 259h1v1h-1zM733 259h1v1h-1zM737 259h1v1h-1zM741 259h1v1h-1zM745 259h1v1h-1zM749 259h1v1h-1zM753 259h1v1h-1zM757 259h1v1h-1zM761 259h1v1h-1zM765 259h1v1h-1zM769 259h1v1h-1zM773 259h1v1h-1zM777 259h1v1h-1zM781 259h1v1h-1zM785 259h1v1h-1zM789 259h1v1h-1zM793 259h1v1h-1zM797 259h1v1h-1zM801 259h1v1h-1zM805 259h1v1h-1zM809 259h1v1h-1zM813 259h1v1h-1zM817 259h1v1h-1zM821 259h1v1h-1zM825 259h1v1h-1zM829 259h1v1h-1zM833 259h1v1h-1zM837 259h1v1h-1zM841 259h1v1h-1zM1 289h1v1h-1zM5 289h1v1h-1zM9 289h1v1h-1zM13 289h1v1h-1zM17 289h1v1h-1zM21 289h1v1h-1zM25 289h1v1h-1zM29 289h1v1h-1zM33 289h1v1h-1zM37 289h1v1h-1zM41 289h1v1h-1zM45 289h1v1h-1zM49 289h1v1h-1zM53 289h1v1h-1zM57 289h1v1h-1zM61 289h1v1h-1zM65 289h1v1h-1zM69 289h1v1h-1zM73 289h1v1h-1zM77 289h1v1h-1zM81 289h1v1h-1zM85 289h1v1h-1zM89 289h1v1h-1zM93 289h1v1h-1zM97 289h1v1h-1zM101 289h1v1h-1zM105 289h1v1h-1zM109 289h1v1h-1zM113 289h1v1h-1zM117 289h1v1h-1zM121 289h1v1h-1zM125 289h1v1h-1zM129 289h1v1h-1zM133 289h1v1h-1zM137 289h1v1h-1zM141 289h1v1h-1zM145 289h1v1h-1zM149 289h1v1h-1zM153 289h1v1h-1zM157 289h1v1h-1zM161 289h1v1h-1zM165 289h1v1h-1zM169 289h1v1h-1zM173 289h1v1h-1zM177 289h1v1h-1zM181 289h1v1h-1zM185 289h1v1h-1zM189 289h1v1h-1zM193 289h1v1h-1zM197 289h1v1h-1zM201 289h1v1h-1zM205 289h1v1h-1zM209 289h1v1h-1zM213 289h1v1h-1zM217 289h1v1h-1zM221 289h1v1h-1zM225 289h1v1h-1zM229 289h1v1h-1zM233 289h1v1h-1zM237 289h1v1h-1zM241 289h1v1h-1zM245 289h1v1h-1zM249 289h1v1h-1zM253 289h1v1h-1zM257 289h1v1h-1zM261 289h1v1h-1zM265 289h1v1h-1zM269 289h1v1h-1zM273 289h1v1h-1zM277 289h1v1h-1zM281 289h1v1h-1zM285 289h1v1h-1zM289 289h1v1h-1zM293 289h1v1h-1zM297 289h1v1h-1zM301 289h1v1h-1zM305 289h1v1h-1zM309 289h1v1h-1zM313 289h1v1h-1zM317 289h1v1h-1zM321 289h1v1h-1zM325 289h1v1h-1zM329 289h1v1h-1zM333 289h1v1h-1zM337 289h1v1h-1zM341 289h1v1h-1zM345 289h1v1h-1zM349 289h1v1h-1zM353 289h1v1h-1zM357 289h1v1h-1zM361 289h1v1h-1zM365 289h1v1h-1zM369 289h1v1h-1zM373 289h1v1h-1zM377 289h1v1h-1zM381 289h1v1h-1zM385 289h1v1h-1zM389 289h1v1h-1zM393 289h1v1h-1zM397 289h1v1h-1zM401 289h1v1h-1zM405 289h1v1h-1zM409 289h1v1h-1zM413 289h1v1h-1zM417 289h1v1h-1zM421 289h1v1h-1zM425 289h1v1h-1zM429 289h1v1h-1zM433 289h1v1h-1zM437 289h1v1h-1zM441 289h1v1h-1zM445 289h1v1h-1zM449 289h1v1h-1zM453 289h1v1h-1zM457 289h1v1h-1zM461 289h1v1h-1zM465 289h1v1h-1zM469 289h1v1h-1zM473 289h1v1h-1zM477 289h1v1h-1zM481 289h1v1h-1zM485 289h1v1h-1zM489 289h1v1h-1zM493 289h1v1h-1zM497 289h1v1h-1zM501 289h1v1h-1zM505 289h1v1h-1zM509 289h1v1h-1zM513 289h1v1h-1zM517 289h1v1h-1zM521 289h1v1h-1zM525 289h1v1h-1zM529 289h1v1h-1zM533 289h1v1h-1zM537 289h1v1h-1zM541 289h1v1h-1zM545 289h1v1h-1zM549 289h1v1h-1zM553 289h1v1h-1zM557 289h1v1h-1zM561 289h1v1h-1zM565 289h1v1h-1zM569 289h1v1h-1zM573 289h1v1h-1zM577 289h1v1h-1zM581 289h1v1h-1zM585 289h1v1h-1zM589 289h1v1h-1zM593 289h1v1h-1zM597 289h1v1h-1zM601 289h1v1h-1zM605 289h1v1h-1zM609 289h1v1h-1zM613 289h1v1h-1zM617 289h1v1h-1zM621 289h1v1h-1zM625 289h1v1h-1zM629 289h1v1h-1zM633 289h1v1h-1zM637 289h1v1h-1zM641 289h1v1h-1zM645 289h1v1h-1zM649 289h1v1h-1zM653 289h1v1h-1zM657 289h1v1h-1zM661 289h1v1h-1zM665 289h1v1h-1zM669 289h1v1h-1zM673 289h1v1h-1zM677 289h1v1h-1zM681 289h1v1h-1zM685 289h1v1h-1zM689 289h1v1h-1zM693 289h1v1h-1zM697 289h1v1h-1zM701 289h1v1h-1zM705 289h1v1h-1zM709 289h1v1h-1zM713 289h1v1h-1zM717 289h1v1h-1zM721 289h1v1h-1zM725 289h1v1h-1zM729 289h1v1h-1zM733 289h1v1h-1zM737 289h1v1h-1zM741 289h1v1h-1zM745 289h1v1h-1zM749 289h1v1h-1zM753 289h1v1h-1zM757 289h1v1h-1zM761 289h1v1h-1zM765 289h1v1h-1zM769 289h1v1h-1zM773 289h1v1h-1zM777 289h1v1h-1zM781 289h1v1h-1zM785 289h1v1h-1zM789 289h1v1h-1zM793 289h1v1h-1zM797 289h1v1h-1zM801 289h1v1h-1zM805 289h1v1h-1zM809 289h1v1h-1zM813 289h1v1h-1zM817 289h1v1h-1zM821 289h1v1h-1zM825 289h1v1h-1zM829 289h1v1h-1zM833 289h1v1h-1zM837 289h1v1h-1zM841 289h1v1h-1zM1 319h1v1h-1zM5 319h1v1h-1zM9 319h1v1h-1zM13 319h1v1h-1zM17 319h1v1h-1zM21 319h1v1h-1zM25 319h1v1h-1zM29 319h1v1h-1zM33 319h1v1h-1zM37 319h1v1h-1zM41 319h1v1h-1zM45 319h1v1h-1zM49 319h1v1h-1zM53 319h1v1h-1zM57 319h1v1h-1zM61 319h1v1h-1zM65 319h1v1h-1zM69 319h1v1h-1zM73 319h1v1h-1zM77 319h1v1h-1zM81 319h1v1h-1zM85 319h1v1h-1zM89 319h1v1h-1zM93 319h1v1h-1zM97 319h1v1h-1zM101 319h1v1h-1zM105 319h1v1h-1zM109 319h1v1h-1zM113 319h1v1h-1zM117 319h1v1h-1zM121 319h1v1h-1zM125 319h1v1h-1zM129 319h1v1h-1zM133 319h1v1h-1zM137 319h1v1h-1zM141 319h1v1h-1zM145 319h1v1h-1zM149 319h1v1h-1zM153 319h1v1h-1zM157 319h1v1h-1zM161 319h1v1h-1zM165 319h1v1h-1zM169 319h1v1h-1zM173 319h1v1h-1zM177 319h1v1h-1zM181 319h1v1h-1zM185 319h1v1h-1zM189 319h1v1h-1zM193 319h1v1h-1zM197 319h1v1h-1zM201 319h1v1h-1zM205 319h1v1h-1zM209 319h1v1h-1zM213 319h1v1h-1zM217 319h1v1h-1zM221 319h1v1h-1zM225 319h1v1h-1zM229 319h1v1h-1zM233 319h1v1h-1zM237 319h1v1h-1zM241 319h1v1h-1zM245 319h1v1h-1zM249 319h1v1h-1zM253 319h1v1h-1zM257 319h1v1h-1zM261 319h1v1h-1zM265 319h1v1h-1zM269 319h1v1h-1zM273 319h1v1h-1zM277 319h1v1h-1zM281 319h1v1h-1zM285 319h1v1h-1zM289 319h1v1h-1zM293 319h1v1h-1zM297 319h1v1h-1zM301 319h1v1h-1zM305 319h1v1h-1zM309 319h1v1h-1zM313 319h1v1h-1zM317 319h1v1h-1zM321 319h1v1h-1zM325 319h1v1h-1zM329 319h1v1h-1zM333 319h1v1h-1zM337 319h1v1h-1zM341 319h1v1h-1zM345 319h1v1h-1zM349 319h1v1h-1zM353 319h1v1h-1zM357 319h1v1h-1zM361 319h1v1h-1zM365 319h1v1h-1zM369 319h1v1h-1zM373 319h1v1h-1zM377 319h1v1h-1zM381 319h1v1h-1zM385 319h1v1h-1zM389 319h1v1h-1zM393 319h1v1h-1zM397 319h1v1h-1zM401 319h1v1h-1zM405 319h1v1h-1zM409 319h1v1h-1zM413 319h1v1h-1zM417 319h1v1h-1zM421 319h1v1h-1zM425 319h1v1h-1zM429 319h1v1h-1zM433 319h1v1h-1zM437 319h1v1h-1zM441 319h1v1h-1zM445 319h1v1h-1zM449 319h1v1h-1zM453 319h1v1h-1zM457 319h1v1h-1zM461 319h1v1h-1zM465 319h1v1h-1zM469 319h1v1h-1zM473 319h1v1h-1zM477 319h1v1h-1zM481 319h1v1h-1zM485 319h1v1h-1zM489 319h1v1h-1zM493 319h1v1h-1zM497 319h1v1h-1zM501 319h1v1h-1zM505 319h1v1h-1zM509 319h1v1h-1zM513 319h1v1h-1zM517 319h1v1h-1zM521 319h1v1h-1zM525 319h1v1h-1zM529 319h1v1h-1zM533 319h1v1h-1zM537 319h1v1h-1zM541 319h1v1h-1zM545 319h1v1h-1zM549 319h1v1h-1zM553 319h1v1h-1zM557 319h1v1h-1zM561 319h1v1h-1zM565 319h1v1h-1zM569 319h1v1h-1zM573 319h1v1h-1zM577 319h1v1h-1zM581 319h1v1h-1zM585 319h1v1h-1zM589 319h1v1h-1zM593 319h1v1h-1zM597 319h1v1h-1zM601 319h1v1h-1zM605 319h1v1h-1zM609 319h1v1h-1zM613 319h1v1h-1zM617 319h1v1h-1zM621 319h1v1h-1zM625 319h1v1h-1zM629 319h1v1h-1zM633 319h1v1h-1zM637 319h1v1h-1zM641 319h1v1h-1zM645 319h1v1h-1zM649 319h1v1h-1zM653 319h1v1h-1zM657 319h1v1h-1zM661 319h1v1h-1zM665 319h1v1h-1zM669 319h1v1h-1zM673 319h1v1h-1zM677 319h1v1h-1zM681 319h1v1h-1zM685 319h1v1h-1zM689 319h1v1h-1zM693 319h1v1h-1zM697 319h1v1h-1zM701 319h1v1h-1zM705 319h1v1h-1zM709 319h1v1h-1zM713 319h1v1h-1zM717 319h1v1h-1zM721 319h1v1h-1zM725 319h1v1h-1zM729 319h1v1h-1zM733 319h1v1h-1zM737 319h1v1h-1zM741 319h1v1h-1zM745 319h1v1h-1zM749 319h1v1h-1zM753 319h1v1h-1zM757 319h1v1h-1zM761 319h1v1h-1zM765 319h1v1h-1zM769 319h1v1h-1zM773 319h1v1h-1zM777 319h1v1h-1zM781 319h1v1h-1zM785 319h1v1h-1zM789 319h1v1h-1zM793 319h1v1h-1zM797 319h1v1h-1zM801 319h1v1h-1zM805 319h1v1h-1zM809 319h1v1h-1zM813 319h1v1h-1zM817 319h1v1h-1zM821 319h1v1h-1zM825 319h1v1h-1zM829 319h1v1h-1zM833 319h1v1h-1zM837 319h1v1h-1zM841 319h1v1h-1zM1 349h1v1h-1zM5 349h1v1h-1zM9 349h1v1h-1zM13 349h1v1h-1zM17 349h1v1h-1zM21 349h1v1h-1zM25 349h1v1h-1zM29 349h1v1h-1zM33 349h1v1h-1zM37 349h1v1h-1zM41 349h1v1h-1zM45 349h1v1h-1zM49 349h1v1h-1zM53 349h1v1h-1zM57 349h1v1h-1zM61 349h1v1h-1zM65 349h1v1h-1zM69 349h1v1h-1zM73 349h1v1h-1zM77 349h1v1h-1zM81 349h1v1h-1zM85 349h1v1h-1zM89 349h1v1h-1zM93 349h1v1h-1zM97 349h1v1h-1zM101 349h1v1h-1zM105 349h1v1h-1zM109 349h1v1h-1zM113 349h1v1h-1zM117 349h1v1h-1zM121 349h1v1h-1zM125 349h1v1h-1zM129 349h1v1h-1zM133 349h1v1h-1zM137 349h1v1h-1zM141 349h1v1h-1zM145 349h1v1h-1zM149 349h1v1h-1zM153 349h1v1h-1zM157 349h1v1h-1zM161 349h1v1h-1zM165 349h1v1h-1zM169 349h1v1h-1zM173 349h1v1h-1zM177 349h1v1h-1zM181 349h1v1h-1zM185 349h1v1h-1zM189 349h1v1h-1zM193 349h1v1h-1zM197 349h1v1h-1zM201 349h1v1h-1zM205 349h1v1h-1zM209 349h1v1h-1zM213 349h1v1h-1zM217 349h1v1h-1zM221 349h1v1h-1zM225 349h1v1h-1zM229 349h1v1h-1zM233 349h1v1h-1zM237 349h1v1h-1zM241 349h1v1h-1zM245 349h1v1h-1zM249 349h1v1h-1zM253 349h1v1h-1zM257 349h1v1h-1zM261 349h1v1h-1zM265 349h1v1h-1zM269 349h1v1h-1zM273 349h1v1h-1zM277 349h1v1h-1zM281 349h1v1h-1zM285 349h1v1h-1zM289 349h1v1h-1zM293 349h1v1h-1zM297 349h1v1h-1zM301 349h1v1h-1zM305 349h1v1h-1zM309 349h1v1h-1zM313 349h1v1h-1zM317 349h1v1h-1zM321 349h1v1h-1zM325 349h1v1h-1zM329 349h1v1h-1zM333 349h1v1h-1zM337 349h1v1h-1zM341 349h1v1h-1zM345 349h1v1h-1zM349 349h1v1h-1zM353 349h1v1h-1zM357 349h1v1h-1zM361 349h1v1h-1zM365 349h1v1h-1zM369 349h1v1h-1zM373 349h1v1h-1zM377 349h1v1h-1zM381 349h1v1h-1zM385 349h1v1h-1zM389 349h1v1h-1zM393 349h1v1h-1zM397 349h1v1h-1zM401 349h1v1h-1zM405 349h1v1h-1zM409 349h1v1h-1zM413 349h1v1h-1zM417 349h1v1h-1zM421 349h1v1h-1zM425 349h1v1h-1zM429 349h1v1h-1zM433 349h1v1h-1zM437 349h1v1h-1zM441 349h1v1h-1zM445 349h1v1h-1zM449 349h1v1h-1zM453 349h1v1h-1zM457 349h1v1h-1zM461 349h1v1h-1zM465 349h1v1h-1zM469 349h1v1h-1zM473 349h1v1h-1zM477 349h1v1h-1zM481 349h1v1h-1zM485 349h1v1h-1zM489 349h1v1h-1zM493 349h1v1h-1zM497 349h1v1h-1zM501 349h1v1h-1zM505 349h1v1h-1zM509 349h1v1h-1zM513 349h1v1h-1zM517 349h1v1h-1zM521 349h1v1h-1zM525 349h1v1h-1zM529 349h1v1h-1zM533 349h1v1h-1zM537 349h1v1h-1zM541 349h1v1h-1zM545 349h1v1h-1zM549 349h1v1h-1zM553 349h1v1h-1zM557 349h1v1h-1zM561 349h1v1h-1zM565 349h1v1h-1zM569 349h1v1h-1zM573 349h1v1h-1zM577 349h1v1h-1zM581 349h1v1h-1zM585 349h1v1h-1zM589 349h1v1h-1zM593 349h1v1h-1zM597 349h1v1h-1zM601 349h1v1h-1zM605 349h1v1h-1zM609 349h1v1h-1zM613 349h1v1h-1zM617 349h1v1h-1zM621 349h1v1h-1zM625 349h1v1h-1zM629 349h1v1h-1zM633 349h1v1h-1zM637 349h1v1h-1zM641 349h1v1h-1zM645 349h1v1h-1zM649 349h1v1h-1zM653 349h1v1h-1zM657 349h1v1h-1zM661 349h1v1h-1zM665 349h1v1h-1zM669 349h1v1h-1zM673 349h1v1h-1zM677 349h1v1h-1zM681 349h1v1h-1zM685 349h1v1h-1zM689 349h1v1h-1zM693 349h1v1h-1zM697 349h1v1h-1zM701 349h1v1h-1zM705 349h1v1h-1zM709 349h1v1h-1zM713 349h1v1h-1zM717 349h1v1h-1zM721 349h1v1h-1zM725 349h1v1h-1zM729 349h1v1h-1zM733 349h1v1h-1zM737 349h1v1h-1zM741 349h1v1h-1zM745 349h1v1h-1zM749 349h1v1h-1zM753 349h1v1h-1zM757 349h1v1h-1zM761 349h1v1h-1zM765 349h1v1h-1zM769 349h1v1h-1zM773 349h1v1h-1zM777 349h1v1h-1zM781 349h1v1h-1zM785 349h1v1h-1zM789 349h1v1h-1zM793 349h1v1h-1zM797 349h1v1h-1zM801 349h1v1h-1zM805 349h1v1h-1zM809 349h1v1h-1zM813 349h1v1h-1zM817 349h1v1h-1zM821 349h1v1h-1zM825 349h1v1h-1zM829 349h1v1h-1zM833 349h1v1h-1zM837 349h1v1h-1zM841 349h1v1h-1zM1 379h1v1h-1zM5 379h1v1h-1zM9 379h1v1h-1zM13 379h1v1h-1zM17 379h1v1h-1zM21 379h1v1h-1zM25 379h1v1h-1zM29 379h1v1h-1zM33 379h1v1h-1zM37 379h1v1h-1zM41 379h1v1h-1zM45 379h1v1h-1zM49 379h1v1h-1zM53 379h1v1h-1zM57 379h1v1h-1zM61 379h1v1h-1zM65 379h1v1h-1zM69 379h1v1h-1zM73 379h1v1h-1zM77 379h1v1h-1zM81 379h1v1h-1zM85 379h1v1h-1zM89 379h1v1h-1zM93 379h1v1h-1zM97 379h1v1h-1zM101 379h1v1h-1zM105 379h1v1h-1zM109 379h1v1h-1zM113 379h1v1h-1zM117 379h1v1h-1zM121 379h1v1h-1zM125 379h1v1h-1zM129 379h1v1h-1zM133 379h1v1h-1zM137 379h1v1h-1zM141 379h1v1h-1zM145 379h1v1h-1zM149 379h1v1h-1zM153 379h1v1h-1zM157 379h1v1h-1zM161 379h1v1h-1zM165 379h1v1h-1zM169 379h1v1h-1zM173 379h1v1h-1zM177 379h1v1h-1zM181 379h1v1h-1zM185 379h1v1h-1zM189 379h1v1h-1zM193 379h1v1h-1zM197 379h1v1h-1zM201 379h1v1h-1zM205 379h1v1h-1zM209 379h1v1h-1zM213 379h1v1h-1zM217 379h1v1h-1zM221 379h1v1h-1zM225 379h1v1h-1zM229 379h1v1h-1zM233 379h1v1h-1zM237 379h1v1h-1zM241 379h1v1h-1zM245 379h1v1h-1zM249 379h1v1h-1zM253 379h1v1h-1zM257 379h1v1h-1zM261 379h1v1h-1zM265 379h1v1h-1zM269 379h1v1h-1zM273 379h1v1h-1zM277 379h1v1h-1zM281 379h1v1h-1zM285 379h1v1h-1zM289 379h1v1h-1zM293 379h1v1h-1zM297 379h1v1h-1zM301 379h1v1h-1zM305 379h1v1h-1zM309 379h1v1h-1zM313 379h1v1h-1zM317 379h1v1h-1zM321 379h1v1h-1zM325 379h1v1h-1zM329 379h1v1h-1zM333 379h1v1h-1zM337 379h1v1h-1zM341 379h1v1h-1zM345 379h1v1h-1zM349 379h1v1h-1zM353 379h1v1h-1zM357 379h1v1h-1zM361 379h1v1h-1zM365 379h1v1h-1zM369 379h1v1h-1zM373 379h1v1h-1zM377 379h1v1h-1zM381 379h1v1h-1zM385 379h1v1h-1zM389 379h1v1h-1zM393 379h1v1h-1zM397 379h1v1h-1zM401 379h1v1h-1zM405 379h1v1h-1zM409 379h1v1h-1zM413 379h1v1h-1zM417 379h1v1h-1zM421 379h1v1h-1zM425 379h1v1h-1zM429 379h1v1h-1zM433 379h1v1h-1zM437 379h1v1h-1zM441 379h1v1h-1zM445 379h1v1h-1zM449 379h1v1h-1zM453 379h1v1h-1zM457 379h1v1h-1zM461 379h1v1h-1zM465 379h1v1h-1zM469 379h1v1h-1zM473 379h1v1h-1zM477 379h1v1h-1zM481 379h1v1h-1zM485 379h1v1h-1zM489 379h1v1h-1zM493 379h1v1h-1zM497 379h1v1h-1zM501 379h1v1h-1zM505 379h1v1h-1zM509 379h1v1h-1zM513 379h1v1h-1zM517 379h1v1h-1zM521 379h1v1h-1zM525 379h1v1h-1zM529 379h1v1h-1zM533 379h1v1h-1zM537 379h1v1h-1zM541 379h1v1h-1zM545 379h1v1h-1zM549 379h1v1h-1zM553 379h1v1h-1zM557 379h1v1h-1zM561 379h1v1h-1zM565 379h1v1h-1zM569 379h1v1h-1zM573 379h1v1h-1zM577 379h1v1h-1zM581 379h1v1h-1zM585 379h1v1h-1zM589 379h1v1h-1zM593 379h1v1h-1zM597 379h1v1h-1zM601 379h1v1h-1zM605 379h1v1h-1zM609 379h1v1h-1zM613 379h1v1h-1zM617 379h1v1h-1zM621 379h1v1h-1zM625 379h1v1h-1zM629 379h1v1h-1zM633 379h1v1h-1zM637 379h1v1h-1zM641 379h1v1h-1zM645 379h1v1h-1zM649 379h1v1h-1zM653 379h1v1h-1zM657 379h1v1h-1zM661 379h1v1h-1zM665 379h1v1h-1zM669 379h1v1h-1zM673 379h1v1h-1zM677 379h1v1h-1zM681 379h1v1h-1zM685 379h1v1h-1zM689 379h1v1h-1zM693 379h1v1h-1zM697 379h1v1h-1zM701 379h1v1h-1zM705 379h1v1h-1zM709 379h1v1h-1zM713 379h1v1h-1zM717 379h1v1h-1zM721 379h1v1h-1zM725 379h1v1h-1zM729 379h1v1h-1zM733 379h1v1h-1zM737 379h1v1h-1zM741 379h1v1h-1zM745 379h1v1h-1zM749 379h1v1h-1zM753 379h1v1h-1zM757 379h1v1h-1zM761 379h1v1h-1zM765 379h1v1h-1zM769 379h1v1h-1zM773 379h1v1h-1zM777 379h1v1h-1zM781 379h1v1h-1zM785 379h1v1h-1zM789 379h1v1h-1zM793 379h1v1h-1zM797 379h1v1h-1zM801 379h1v1h-1zM805 379h1v1h-1zM809 379h1v1h-1zM813 379h1v1h-1zM817 379h1v1h-1zM821 379h1v1h-1zM825 379h1v1h-1zM829 379h1v1h-1zM833 379h1v1h-1zM837 379h1v1h-1zM841 379h1v1h-1zM1 409h1v1h-1zM5 409h1v1h-1zM9 409h1v1h-1zM13 409h1v1h-1zM17 409h1v1h-1zM21 409h1v1h-1zM25 409h1v1h-1zM29 409h1v1h-1zM33 409h1v1h-1zM37 409h1v1h-1zM41 409h1v1h-1zM45 409h1v1h-1zM49 409h1v1h-1zM53 409h1v1h-1zM57 409h1v1h-1zM61 409h1v1h-1zM65 409h1v1h-1zM69 409h1v1h-1zM73 409h1v1h-1zM77 409h1v1h-1zM81 409h1v1h-1zM85 409h1v1h-1zM89 409h1v1h-1zM93 409h1v1h-1zM97 409h1v1h-1zM101 409h1v1h-1zM105 409h1v1h-1zM109 409h1v1h-1zM113 409h1v1h-1zM117 409h1v1h-1zM121 409h1v1h-1zM125 409h1v1h-1zM129 409h1v1h-1zM133 409h1v1h-1zM137 409h1v1h-1zM141 409h1v1h-1zM145 409h1v1h-1zM149 409h1v1h-1zM153 409h1v1h-1zM157 409h1v1h-1zM161 409h1v1h-1zM165 409h1v1h-1zM169 409h1v1h-1zM173 409h1v1h-1zM177 409h1v1h-1zM181 409h1v1h-1zM185 409h1v1h-1zM189 409h1v1h-1zM193 409h1v1h-1zM197 409h1v1h-1zM201 409h1v1h-1zM205 409h1v1h-1zM209 409h1v1h-1zM213 409h1v1h-1zM217 409h1v1h-1zM221 409h1v1h-1zM225 409h1v1h-1zM229 409h1v1h-1zM233 409h1v1h-1zM237 409h1v1h-1zM241 409h1v1h-1zM245 409h1v1h-1zM249 409h1v1h-1zM253 409h1v1h-1zM257 409h1v1h-1zM261 409h1v1h-1zM265 409h1v1h-1zM269 409h1v1h-1zM273 409h1v1h-1zM277 409h1v1h-1zM281 409h1v1h-1zM285 409h1v1h-1zM289 409h1v1h-1zM293 409h1v1h-1zM297 409h1v1h-1zM301 409h1v1h-1zM305 409h1v1h-1zM309 409h1v1h-1zM313 409h1v1h-1zM317 409h1v1h-1zM321 409h1v1h-1zM325 409h1v1h-1zM329 409h1v1h-1zM333 409h1v1h-1zM337 409h1v1h-1zM341 409h1v1h-1zM345 409h1v1h-1zM349 409h1v1h-1zM353 409h1v1h-1zM357 409h1v1h-1zM361 409h1v1h-1zM365 409h1v1h-1zM369 409h1v1h-1zM373 409h1v1h-1zM377 409h1v1h-1zM381 409h1v1h-1zM385 409h1v1h-1zM389 409h1v1h-1zM393 409h1v1h-1zM397 409h1v1h-1zM401 409h1v1h-1zM405 409h1v1h-1zM409 409h1v1h-1zM413 409h1v1h-1zM417 409h1v1h-1zM421 409h1v1h-1zM425 409h1v1h-1zM429 409h1v1h-1zM433 409h1v1h-1zM437 409h1v1h-1zM441 409h1v1h-1zM445 409h1v1h-1zM449 409h1v1h-1zM453 409h1v1h-1zM457 409h1v1h-1zM461 409h1v1h-1zM465 409h1v1h-1zM469 409h1v1h-1zM473 409h1v1h-1zM477 409h1v1h-1zM481 409h1v1h-1zM485 409h1v1h-1zM489 409h1v1h-1zM493 409h1v1h-1zM497 409h1v1h-1zM501 409h1v1h-1zM505 409h1v1h-1zM509 409h1v1h-1zM513 409h1v1h-1zM517 409h1v1h-1zM521 409h1v1h-1zM525 409h1v1h-1zM529 409h1v1h-1zM533 409h1v1h-1zM537 409h1v1h-1zM541 409h1v1h-1zM545 409h1v1h-1zM549 409h1v1h-1zM553 409h1v1h-1zM557 409h1v1h-1zM561 409h1v1h-1zM565 409h1v1h-1zM569 409h1v1h-1zM573 409h1v1h-1zM577 409h1v1h-1zM581 409h1v1h-1zM585 409h1v1h-1zM589 409h1v1h-1zM593 409h1v1h-1zM597 409h1v1h-1zM601 409h1v1h-1zM605 409h1v1h-1zM609 409h1v1h-1zM613 409h1v1h-1zM617 409h1v1h-1zM621 409h1v1h-1zM625 409h1v1h-1zM629 409h1v1h-1zM633 409h1v1h-1zM637 409h1v1h-1zM641 409h1v1h-1zM645 409h1v1h-1zM649 409h1v1h-1zM653 409h1v1h-1zM657 409h1v1h-1zM661 409h1v1h-1zM665 409h1v1h-1zM669 409h1v1h-1zM673 409h1v1h-1zM677 409h1v1h-1zM681 409h1v1h-1zM685 409h1v1h-1zM689 409h1v1h-1zM693 409h1v1h-1zM697 409h1v1h-1zM701 409h1v1h-1zM705 409h1v1h-1zM709 409h1v1h-1zM713 409h1v1h-1zM717 409h1v1h-1zM721 409h1v1h-1zM725 409h1v1h-1zM729 409h1v1h-1zM733 409h1v1h-1zM737 409h1v1h-1zM741 409h1v1h-1zM745 409h1v1h-1zM749 409h1v1h-1zM753 409h1v1h-1zM757 409h1v1h-1zM761 409h1v1h-1zM765 409h1v1h-1zM769 409h1v1h-1zM773 409h1v1h-1zM777 409h1v1h-1zM781 409h1v1h-1zM785 409h1v1h-1zM789 409h1v1h-1zM793 409h1v1h-1zM797 409h1v1h-1zM801 409h1v1h-1zM805 409h1v1h-1zM809 409h1v1h-1zM813 409h1v1h-1zM817 409h1v1h-1zM821 409h1v1h-1zM825 409h1v1h-1zM829 409h1v1h-1zM833 409h1v1h-1zM837 409h1v1h-1zM841 409h1v1h-1zM1 457h1v1h-1zM5 457h1v1h-1zM9 457h1v1h-1zM13 457h1v1h-1zM17 457h1v1h-1zM21 457h1v1h-1zM25 457h1v1h-1zM29 457h1v1h-1zM33 457h1v1h-1zM37 457h1v1h-1zM41 457h1v1h-1zM45 457h1v1h-1zM49 457h1v1h-1zM53 457h1v1h-1zM57 457h1v1h-1zM61 457h1v1h-1zM65 457h1v1h-1zM69 457h1v1h-1zM73 457h1v1h-1zM77 457h1v1h-1zM81 457h1v1h-1zM85 457h1v1h-1zM89 457h1v1h-1zM93 457h1v1h-1zM97 457h1v1h-1zM101 457h1v1h-1zM105 457h1v1h-1zM109 457h1v1h-1zM113 457h1v1h-1zM117 457h1v1h-1zM121 457h1v1h-1zM125 457h1v1h-1zM129 457h1v1h-1zM133 457h1v1h-1zM137 457h1v1h-1zM141 457h1v1h-1zM145 457h1v1h-1zM149 457h1v1h-1zM153 457h1v1h-1zM157 457h1v1h-1zM161 457h1v1h-1zM165 457h1v1h-1zM169 457h1v1h-1zM173 457h1v1h-1zM177 457h1v1h-1zM181 457h1v1h-1zM185 457h1v1h-1zM189 457h1v1h-1zM193 457h1v1h-1zM197 457h1v1h-1zM201 457h1v1h-1zM205 457h1v1h-1zM209 457h1v1h-1zM213 457h1v1h-1zM217 457h1v1h-1zM221 457h1v1h-1zM225 457h1v1h-1zM229 457h1v1h-1zM233 457h1v1h-1zM237 457h1v1h-1zM241 457h1v1h-1zM245 457h1v1h-1zM249 457h1v1h-1zM253 457h1v1h-1zM257 457h1v1h-1zM261 457h1v1h-1zM265 457h1v1h-1zM269 457h1v1h-1zM273 457h1v1h-1zM277 457h1v1h-1zM281 457h1v1h-1zM285 457h1v1h-1zM289 457h1v1h-1zM293 457h1v1h-1zM297 457h1v1h-1zM301 457h1v1h-1zM305 457h1v1h-1zM309 457h1v1h-1zM313 457h1v1h-1zM317 457h1v1h-1zM321 457h1v1h-1zM325 457h1v1h-1zM329 457h1v1h-1zM333 457h1v1h-1zM337 457h1v1h-1zM341 457h1v1h-1zM345 457h1v1h-1zM349 457h1v1h-1zM353 457h1v1h-1zM357 457h1v1h-1zM361 457h1v1h-1zM365 457h1v1h-1zM369 457h1v1h-1zM373 457h1v1h-1zM377 457h1v1h-1zM381 457h1v1h-1zM385 457h1v1h-1zM389 457h1v1h-1zM393 457h1v1h-1zM397 457h1v1h-1zM401 457h1v1h-1zM405 457h1v1h-1zM409 457h1v1h-1zM413 457h1v1h-1zM417 457h1v1h-1zM421 457h1v1h-1zM425 457h1v1h-1zM429 457h1v1h-1zM433 457h1v1h-1zM437 457h1v1h-1zM441 457h1v1h-1zM445 457h1v1h-1zM449 457h1v1h-1zM453 457h1v1h-1zM457 457h1v1h-1zM461 457h1v1h-1zM465 457h1v1h-1zM469 457h1v1h-1zM473 457h1v1h-1zM477 457h1v1h-1zM481 457h1v1h-1zM485 457h1v1h-1zM489 457h1v1h-1zM493 457h1v1h-1zM497 457h1v1h-1zM501 457h1v1h-1zM505 457h1v1h-1zM509 457h1v1h-1zM513 457h1v1h-1zM517 457h1v1h-1zM521 457h1v1h-1zM525 457h1v1h-1zM529 457h1v1h-1zM533 457h1v1h-1zM537 457h1v1h-1zM541 457h1v1h-1zM545 457h1v1h-1zM549 457h1v1h-1zM553 457h1v1h-1zM557 457h1v1h-1zM561 457h1v1h-1zM565 457h1v1h-1zM569 457h1v1h-1zM573 457h1v1h-1zM577 457h1v1h-1zM581 457h1v1h-1zM585 457h1v1h-1zM589 457h1v1h-1zM593 457h1v1h-1zM597 457h1v1h-1zM601 457h1v1h-1zM605 457h1v1h-1zM609 457h1v1h-1zM613 457h1v1h-1zM617 457h1v1h-1zM621 457h1v1h-1zM625 457h1v1h-1zM629 457h1v1h-1zM633 457h1v1h-1zM637 457h1v1h-1zM641 457h1v1h-1zM645 457h1v1h-1zM649 457h1v1h-1zM653 457h1v1h-1zM657 457h1v1h-1zM661 457h1v1h-1zM665 457h1v1h-1zM669 457h1v1h-1zM673 457h1v1h-1zM677 457h1v1h-1zM681 457h1v1h-1zM685 457h1v1h-1zM689 457h1v1h-1zM693 457h1v1h-1zM697 457h1v1h-1zM701 457h1v1h-1zM705 457h1v1h-1zM709 457h1v1h-1zM713 457h1v1h-1zM717 457h1v1h-1zM721 457h1v1h-1zM725 457h1v1h-1zM729 457h1v1h-1zM733 457h1v1h-1zM737 457h1v1h-1zM741 457h1v1h-1zM745 457h1v1h-1zM749 457h1v1h-1zM753 457h1v1h-1zM757 457h1v1h-1zM761 457h1v1h-1zM765 457h1v1h-1zM769 457h1v1h-1zM773 457h1v1h-1zM777 457h1v1h-1zM781 457h1v1h-1zM785 457h1v1h-1zM789 457h1v1h-1zM793 457h1v1h-1zM797 457h1v1h-1zM801 457h1v1h-1zM805 457h1v1h-1zM809 457h1v1h-1zM813 457h1v1h-1zM817 457h1v1h-1zM821 457h1v1h-1zM825 457h1v1h-1zM829 457h1v1h-1zM833 457h1v1h-1zM837 457h1v1h-1zM841 457h1v1h-1zM1 508h1v1h-1zM5 508h1v1h-1zM9 508h1v1h-1zM13 508h1v1h-1zM17 508h1v1h-1zM21 508h1v1h-1zM25 508h1v1h-1zM29 508h1v1h-1zM33 508h1v1h-1zM37 508h1v1h-1zM41 508h1v1h-1zM45 508h1v1h-1zM49 508h1v1h-1zM53 508h1v1h-1zM57 508h1v1h-1zM61 508h1v1h-1zM65 508h1v1h-1zM69 508h1v1h-1zM73 508h1v1h-1zM77 508h1v1h-1zM81 508h1v1h-1zM85 508h1v1h-1zM89 508h1v1h-1zM93 508h1v1h-1zM97 508h1v1h-1zM101 508h1v1h-1zM105 508h1v1h-1zM109 508h1v1h-1zM113 508h1v1h-1zM117 508h1v1h-1zM121 508h1v1h-1zM125 508h1v1h-1zM129 508h1v1h-1zM133 508h1v1h-1zM137 508h1v1h-1zM141 508h1v1h-1zM145 508h1v1h-1zM149 508h1v1h-1zM153 508h1v1h-1zM157 508h1v1h-1zM161 508h1v1h-1zM165 508h1v1h-1zM169 508h1v1h-1zM173 508h1v1h-1zM177 508h1v1h-1zM181 508h1v1h-1zM185 508h1v1h-1zM189 508h1v1h-1zM193 508h1v1h-1zM197 508h1v1h-1zM201 508h1v1h-1zM205 508h1v1h-1zM209 508h1v1h-1zM213 508h1v1h-1zM217 508h1v1h-1zM221 508h1v1h-1zM225 508h1v1h-1zM229 508h1v1h-1zM233 508h1v1h-1zM237 508h1v1h-1zM241 508h1v1h-1zM245 508h1v1h-1zM249 508h1v1h-1zM253 508h1v1h-1zM257 508h1v1h-1zM261 508h1v1h-1zM265 508h1v1h-1zM269 508h1v1h-1zM273 508h1v1h-1zM277 508h1v1h-1zM281 508h1v1h-1zM285 508h1v1h-1zM289 508h1v1h-1zM293 508h1v1h-1zM297 508h1v1h-1zM301 508h1v1h-1zM305 508h1v1h-1zM309 508h1v1h-1zM313 508h1v1h-1zM317 508h1v1h-1zM321 508h1v1h-1zM325 508h1v1h-1zM329 508h1v1h-1zM333 508h1v1h-1zM337 508h1v1h-1zM341 508h1v1h-1zM345 508h1v1h-1zM349 508h1v1h-1zM353 508h1v1h-1zM357 508h1v1h-1zM361 508h1v1h-1zM365 508h1v1h-1zM369 508h1v1h-1zM373 508h1v1h-1zM377 508h1v1h-1zM381 508h1v1h-1zM385 508h1v1h-1zM389 508h1v1h-1zM393 508h1v1h-1zM397 508h1v1h-1zM401 508h1v1h-1zM405 508h1v1h-1zM409 508h1v1h-1zM413 508h1v1h-1zM417 508h1v1h-1zM421 508h1v1h-1zM425 508h1v1h-1zM429 508h1v1h-1zM433 508h1v1h-1zM437 508h1v1h-1zM441 508h1v1h-1zM445 508h1v1h-1zM449 508h1v1h-1zM453 508h1v1h-1zM457 508h1v1h-1zM461 508h1v1h-1zM465 508h1v1h-1zM469 508h1v1h-1zM473 508h1v1h-1zM477 508h1v1h-1zM481 508h1v1h-1zM485 508h1v1h-1zM489 508h1v1h-1zM493 508h1v1h-1zM497 508h1v1h-1zM501 508h1v1h-1zM505 508h1v1h-1zM509 508h1v1h-1zM513 508h1v1h-1zM517 508h1v1h-1zM521 508h1v1h-1zM525 508h1v1h-1zM529 508h1v1h-1zM533 508h1v1h-1zM537 508h1v1h-1zM541 508h1v1h-1zM545 508h1v1h-1zM549 508h1v1h-1zM553 508h1v1h-1zM557 508h1v1h-1zM561 508h1v1h-1zM565 508h1v1h-1zM569 508h1v1h-1zM573 508h1v1h-1zM577 508h1v1h-1zM581 508h1v1h-1zM585 508h1v1h-1zM589 508h1v1h-1zM593 508h1v1h-1zM597 508h1v1h-1zM601 508h1v1h-1zM605 508h1v1h-1zM609 508h1v1h-1zM613 508h1v1h-1zM617 508h1v1h-1zM621 508h1v1h-1zM625 508h1v1h-1zM629 508h1v1h-1zM633 508h1v1h-1zM637 508h1v1h-1zM641 508h1v1h-1zM645 508h1v1h-1zM649 508h1v1h-1zM653 508h1v1h-1zM657 508h1v1h-1zM661 508h1v1h-1zM665 508h1v1h-1zM669 508h1v1h-1zM673 508h1v1h-1zM677 508h1v1h-1zM681 508h1v1h-1zM685 508h1v1h-1zM689 508h1v1h-1zM693 508h1v1h-1zM697 508h1v1h-1zM701 508h1v1h-1zM705 508h1v1h-1zM709 508h1v1h-1zM713 508h1v1h-1zM717 508h1v1h-1zM721 508h1v1h-1zM725 508h1v1h-1zM729 508h1v1h-1zM733 508h1v1h-1zM737 508h1v1h-1zM741 508h1v1h-1zM745 508h1v1h-1zM749 508h1v1h-1zM753 508h1v1h-1zM757 508h1v1h-1zM761 508h1v1h-1zM765 508h1v1h-1zM769 508h1v1h-1zM773 508h1v1h-1zM777 508h1v1h-1zM781 508h1v1h-1zM785 508h1v1h-1zM789 508h1v1h-1zM793 508h1v1h-1zM797 508h1v1h-1zM801 508h1v1h-1zM805 508h1v1h-1zM809 508h1v1h-1zM813 508h1v1h-1zM817 508h1v1h-1zM821 508h1v1h-1zM825 508h1v1h-1zM829 508h1v1h-1zM833 508h1v1h-1zM837 508h1v1h-1zM841 508h1v1h-1z" fill="#a00000"/>
<rect x="0" y="0" width="849" height="1" fill="#c80000"/>
<rect x="0" y="422" width="849" height="1" fill="#c80000"/>
<rect x="846" y="0" width="1" height="609" fill="#c80000"/>
<rect x="846" y="422" width="2" height="187" fill="#c80000"/>
<path d="M847 19h2v1h-2zM847 34h2v1h-2zM847 49h2v1h-2zM847 64h2v1h-2zM847 79h2v1h-2zM847 94h2v1h-2zM847 109h2v1h-2zM847 124h2v1h-2zM847 139h2v1h-2zM847 154h2v1h-2zM847 169h2v1h-2zM847 184h2v1h-2zM847 199h2v1h-2zM847 214h2v1h-2zM847 229h2v1h-2zM847 244h2v1h-2zM847 259h2v1h-2zM847 274h2v1h-2zM847 289h2v1h-2zM847 304h2v1h-2zM847 319h2v1h-2zM847 334h2v1h-2zM847 349h2v1h-2zM847 364h2v1h-2zM847 379h2v1h-2zM847 394h2v1h-2zM847 409h2v1h-2z" fill="#c80000"/>
<path d="M7 357h5v6h-5zM9 344h1v13h-1zM9 363h1v9h-1zM13 368h5v5h-5zM15 373h1v18h-1zM20 375h5v3h-5zM22 378h1v4h-1zM26 375h5v3h-5zM28 368h1v7h-1zM28 378h1v5h-1zM32 380h5v3h-5zM34 378h1v2h-1zM34 383h1v4h-1zM39 381h5v6h-5zM41 380h1v1h-1zM41 387h1v3h-1zM52 379h5v15h-5zM54 375h1v4h-1zM54 394h1v3h-1zM71 365h5v3h-5zM73 363h1v2h-1zM73 368h1v4h-1zM77 369h5v3h-5zM79 372h1v3h-1zM96 358h5v10h-5zM98 357h1v1h-1zM98 368h1v5h-1zM115 351h5v3h-5zM117 343h1v8h-1zM117 354h1v1h-1zM122 355h5v3h-5zM124 354h1v1h-1zM124 358h1v6h-1zM128 355h5v7h-5zM130 351h1v4h-1zM130 362h1v3h-1zM134 366h5v4h-5zM136 363h1v3h-1zM141 372h5v2h-5zM143 364h1v8h-1zM192 330h5v4h-5zM194 328h1v2h-1zM194 334h1v2h-1zM198 331h5v5h-5zM200 336h1v7h-1zM211 331h5v7h-5zM213 330h1v1h-1zM213 338h1v5h-1zM223 322h5v2h-5zM225 319h1v3h-1zM225 324h1v6h-1zM230 326h5v4h-5zM232 325h1v1h-1zM232 330h1v5h-1zM236 336h5v5h-5zM238 328h1v8h-1zM268 301h5v9h-5zM270 298h1v3h-1zM270 310h1v2h-1zM274 309h5v3h-5zM276 307h1v2h-1zM276 312h1v4h-1zM300 248h5v16h-5zM302 221h1v27h-1zM302 264h1v8h-1zM331 88h5v16h-5zM333 49h1v39h-1zM333 104h1v15h-1zM344 49h5v21h-5zM346 21h1v28h-1zM346 70h1v21h-1zM351 88h5v2h-5zM353 80h1v8h-1zM353 90h1v24h-1zM357 109h5v12h-5zM359 87h1v22h-1zM359 121h1v1h-1zM370 83h5v38h-5zM372 121h1v3h-1zM376 115h5v31h-5zM382 145h5v16h-5zM384 132h1v13h-1zM384 161h1v1h-1zM389 160h5v13h-5zM391 152h1v8h-1zM391 173h1v16h-1zM401 133h5v12h-5zM403 145h1v9h-1zM414 146h5v11h-5zM416 142h1v4h-1zM416 157h1v17h-1zM421 161h5v13h-5zM423 143h1v18h-1zM427 161h5v27h-5zM429 188h1v1h-1zM433 181h5v1h-5zM435 174h1v7h-1zM435 182h1v6h-1zM446 144h5v1h-5zM448 132h1v12h-1zM448 145h1v4h-1zM465 129h5v19h-5zM467 126h1v3h-1zM478 131h5v14h-5zM480 125h1v6h-1zM480 145h1v6h-1zM484 149h5v26h-5zM486 139h1v10h-1zM486 175h1v12h-1zM497 155h5v33h-5zM499 154h1v1h-1zM499 188h1v2h-1zM503 187h5v6h-5zM505 193h1v24h-1zM510 190h5v8h-5zM512 182h1v8h-1zM512 198h1v1h-1zM516 184h5v1h-5zM518 185h1v15h-1zM529 164h5v3h-5zM531 157h1v7h-1zM531 167h1v5h-1zM535 172h5v5h-5zM537 167h1v5h-1zM537 177h1v11h-1zM541 177h5v6h-5zM543 183h1v7h-1zM560 167h5v30h-5zM562 164h1v3h-1zM562 197h1v4h-1zM567 197h5v19h-5zM569 196h1v1h-1zM569 216h1v1h-1zM592 199h5v14h-5zM594 198h1v1h-1zM594 213h1v4h-1zM599 208h5v9h-5zM601 217h1v6h-1zM605 221h5v5h-5zM607 216h1v5h-1zM607 226h1v4h-1zM618 220h5v20h-5zM620 216h1v4h-1zM620 240h1v4h-1zM624 239h5v2h-5zM626 236h1v3h-1zM626 241h1v7h-1zM630 247h5v12h-5zM632 244h1v3h-1zM632 259h1v3h-1zM637 258h5v18h-5zM639 252h1v6h-1zM639 276h1v2h-1zM656 250h5v8h-5zM658 258h1v3h-1zM662 255h5v6h-5zM664 254h1v1h-1zM664 261h1v4h-1zM669 264h5v7h-5zM671 260h1v4h-1zM671 271h1v5h-1zM681 247h5v14h-5zM683 244h1v3h-1zM688 258h5v8h-5zM690 266h1v5h-1zM694 265h5v1h-5zM696 263h1v2h-1zM696 266h1v4h-1zM700 268h5v13h-5zM702 281h1v3h-1zM707 280h5v3h-5zM709 276h1v4h-1zM709 283h1v7h-1zM713 283h5v14h-5zM715 280h1v3h-1zM726 283h5v9h-5zM728 292h1v7h-1zM751 255h5v6h-5zM753 253h1v2h-1zM753 261h1v5h-1zM758 264h5v6h-5zM760 256h1v8h-1zM760 270h1v1h-1zM770 265h5v9h-5zM772 261h1v4h-1zM772 274h1v2h-1zM777 274h5v2h-5zM779 272h1v2h-1zM779 276h1v7h-1zM783 278h5v16h-5zM785 294h1v1h-1zM796 296h5v6h-5zM798 289h1v7h-1zM798 302h1v4h-1zM809 307h5v2h-5zM811 298h1v9h-1zM811 309h1v6h-1z" fill="#54ffff"/>
<path d="M1 352h5v1h-5zM1 386h5v1h-5zM1 352h1v35h-1zM5 352h1v35h-1zM3 387h1v3h-1zM45 382h5v1h-5zM45 387h5v1h-5zM45 382h1v6h-1zM49 382h1v6h-1zM47 373h1v9h-1zM47 388h1v3h-1zM58 379h5v1h-5zM58 396h5v1h-5zM58 379h1v18h-1zM62 379h1v18h-1zM60 397h1v4h-1zM64 363h5v1h-5zM64 378h5v1h-5zM64 363h1v16h-1zM68 363h1v16h-1zM66 361h1v2h-1zM66 379h1v2h-1zM83 368h5v1h-5zM83 371h5v1h-5zM83 368h1v4h-1zM87 368h1v4h-1zM85 364h1v4h-1zM90 358h5v1h-5zM90 363h5v1h-5zM90 358h1v6h-1zM94 358h1v6h-1zM92 356h1v2h-1zM92 364h1v2h-1zM102 356h5v1h-5zM102 366h5v1h-5zM102 356h1v11h-1zM106 356h1v11h-1zM104 367h1v3h-1zM109 349h5v1h-5zM109 357h5v1h-5zM109 349h1v9h-1zM113 349h1v9h-1zM111 347h1v2h-1zM111 358h1v1h-1zM147 373h5v1h-5zM149 371h1v2h-1zM149 374h1v5h-1zM153 353h5v1h-5zM153 372h5v1h-5zM153 353h1v20h-1zM157 353h1v20h-1zM155 373h1v3h-1zM160 345h5v1h-5zM160 353h5v1h-5zM160 345h1v9h-1zM164 345h1v9h-1zM162 338h1v7h-1zM166 340h5v1h-5zM166 345h5v1h-5zM166 340h1v6h-1zM170 340h1v6h-1zM168 334h1v6h-1zM172 342h5v1h-5zM174 338h1v4h-1zM174 343h1v6h-1zM179 338h5v1h-5zM179 343h5v1h-5zM179 338h1v6h-1zM183 338h1v6h-1zM181 330h1v8h-1zM181 344h1v6h-1zM185 327h5v1h-5zM185 337h5v1h-5zM185 327h1v11h-1zM189 327h1v11h-1zM187 326h1v1h-1zM204 330h5v1h-5zM204 336h5v1h-5zM204 330h1v7h-1zM208 330h1v7h-1zM206 326h1v4h-1zM206 337h1v4h-1zM217 319h5v1h-5zM217 337h5v1h-5zM217 319h1v19h-1zM221 319h1v19h-1zM219 338h1v6h-1zM242 336h5v1h-5zM242 350h5v1h-5zM242 336h1v15h-1zM246 336h1v15h-1zM244 351h1v3h-1zM249 337h5v1h-5zM249 341h5v1h-5zM249 337h1v5h-1zM253 337h1v5h-1zM251 328h1v9h-1zM255 323h5v1h-5zM255 333h5v1h-5zM255 323h1v11h-1zM259 323h1v11h-1zM257 322h1v1h-1zM257 334h1v5h-1zM261 305h5v1h-5zM261 322h5v1h-5zM261 305h1v18h-1zM265 305h1v18h-1zM263 301h1v4h-1zM263 323h1v5h-1zM281 301h5v1h-5zM281 311h5v1h-5zM281 301h1v11h-1zM285 301h1v11h-1zM283 292h1v9h-1zM283 312h1v5h-1zM287 277h5v1h-5zM287 300h5v1h-5zM287 277h1v24h-1zM291 277h1v24h-1zM289 267h1v10h-1zM293 247h5v1h-5zM293 278h5v1h-5zM293 247h1v32h-1zM297 247h1v32h-1zM295 244h1v3h-1zM295 279h1v2h-1zM306 232h5v1h-5zM306 264h5v1h-5zM306 232h1v33h-1zM310 232h1v33h-1zM308 230h1v2h-1zM308 265h1v6h-1zM312 176h5v1h-5zM312 233h5v1h-5zM312 176h1v58h-1zM316 176h1v58h-1zM314 234h1v9h-1zM319 151h5v1h-5zM319 180h5v1h-5zM319 151h1v30h-1zM323 151h1v30h-1zM321 143h1v8h-1zM321 181h1v17h-1zM325 99h5v1h-5zM325 158h5v1h-5zM325 99h1v60h-1zM329 99h1v60h-1zM327 92h1v7h-1zM327 159h1v10h-1zM338 49h5v1h-5zM338 111h5v1h-5zM338 49h1v63h-1zM342 49h1v63h-1zM340 112h1v15h-1zM363 95h5v1h-5zM363 108h5v1h-5zM363 95h1v14h-1zM367 95h1v14h-1zM365 109h1v10h-1zM395 131h5v1h-5zM395 167h5v1h-5zM395 131h1v37h-1zM399 131h1v37h-1zM397 128h1v3h-1zM397 168h1v17h-1zM408 140h5v1h-5zM408 145h5v1h-5zM408 140h1v6h-1zM412 140h1v6h-1zM410 138h1v2h-1zM410 146h1v3h-1zM440 139h5v1h-5zM440 177h5v1h-5zM440 139h1v39h-1zM444 139h1v39h-1zM442 135h1v4h-1zM442 178h1v8h-1zM452 140h5v1h-5zM452 146h5v1h-5zM452 140h1v7h-1zM456 140h1v7h-1zM454 139h1v1h-1zM454 147h1v7h-1zM471 131h5v1h-5zM471 148h5v1h-5zM471 131h1v18h-1zM475 131h1v18h-1zM473 125h1v6h-1zM473 149h1v3h-1zM490 164h5v1h-5zM490 177h5v1h-5zM490 164h1v14h-1zM494 164h1v14h-1zM492 158h1v6h-1zM522 167h5v1h-5zM522 187h5v1h-5zM522 167h1v21h-1zM526 167h1v21h-1zM548 186h5v1h-5zM550 177h1v9h-1zM550 187h1v3h-1zM554 167h5v1h-5zM554 185h5v1h-5zM554 167h1v19h-1zM558 167h1v19h-1zM556 160h1v7h-1zM556 186h1v19h-1zM573 210h5v1h-5zM573 215h5v1h-5zM573 210h1v6h-1zM577 210h1v6h-1zM575 208h1v2h-1zM575 216h1v12h-1zM580 212h5v1h-5zM582 208h1v4h-1zM582 213h1v9h-1zM611 221h5v1h-5zM611 234h5v1h-5zM611 221h1v14h-1zM615 221h1v14h-1zM613 235h1v10h-1zM643 258h5v1h-5zM643 277h5v1h-5zM643 258h1v20h-1zM647 258h1v20h-1zM645 256h1v2h-1zM649 253h5v1h-5zM649 255h5v1h-5zM649 253h1v3h-1zM653 253h1v3h-1zM651 243h1v10h-1zM651 256h1v6h-1zM675 249h5v1h-5zM675 269h5v1h-5zM675 249h1v21h-1zM679 249h1v21h-1zM677 246h1v3h-1zM677 270h1v6h-1zM719 286h5v1h-5zM719 297h5v1h-5zM719 286h1v12h-1zM723 286h1v12h-1zM721 275h1v11h-1zM732 277h5v1h-5zM732 288h5v1h-5zM732 277h1v12h-1zM736 277h1v12h-1zM734 271h1v6h-1zM734 289h1v2h-1zM739 262h5v1h-5zM739 273h5v1h-5zM739 262h1v12h-1zM743 262h1v12h-1zM745 255h5v1h-5zM745 262h5v1h-5zM745 255h1v8h-1zM749 255h1v8h-1zM747 252h1v3h-1zM747 263h1v3h-1zM764 266h5v1h-5zM766 267h1v11h-1zM789 292h5v1h-5zM789 295h5v1h-5zM789 292h1v4h-1zM793 292h1v4h-1zM791 289h1v3h-1zM791 296h1v3h-1zM815 308h5v1h-5zM815 312h5v1h-5zM815 308h1v5h-1zM819 308h1v5h-1zM817 313h1v5h-1zM821 258h5v1h-5zM821 312h5v1h-5zM821 258h1v55h-1zM825 258h1v55h-1zM823 313h1v2h-1z" fill="#ff3232"/>
<path d="M459 134h5v1h-5zM461 122h1v12h-1zM461 134h1v5h-1zM586 205h5v1h-5zM588 187h1v18h-1zM588 206h1v1h-1zM802 303h5v1h-5zM804 298h1v5h-1zM804 304h1v11h-1z" fill="#ffffff"/>
<polyline points="3.5,395.5 9.5,395.5 15.5,395.8 22.5,396.6 28.5,397.2 34.5,398.0 41.5,398.5 47.5,398.5 54.5,398.5 60.5,397.8 66.5,396.4 73.5,395.2 79.5,394.8 85.5,394.1 92.5,393.0 98.5,392.4 104.5,391.8 111.5,391.1 117.5,390.6 124.5,390.1 130.5,389.8 136.5,389.6 143.5,389.3 149.5,389.1 155.5,388.2 162.5,386.7 168.5,385.7 174.5,384.8 181.5,383.8 187.5,383.0 194.5,382.1 200.5,381.1 206.5,379.9 213.5,378.7 219.5,377.7 225.5,376.7 232.5,375.5 238.5,374.4 244.5,373.3 251.5,371.9 257.5,370.6 263.5,369.2 270.5,367.6 276.5,365.9 283.5,364.0 289.5,362.3 295.5,360.1 302.5,357.5 308.5,355.0 314.5,351.2 321.5,346.7 327.5,340.8 333.5,334.8 340.5,327.8 346.5,322.8 353.5,317.9 359.5,313.4 365.5,308.8 372.5,304.7 378.5,300.9 384.5,297.7 391.5,294.6 397.5,290.5 403.5,286.7 410.5,282.7 416.5,278.9 423.5,275.4 429.5,272.1 435.5,268.6 442.5,264.6 448.5,261.0 454.5,257.2 461.5,253.2 467.5,249.6 473.5,245.8 480.5,242.1 486.5,239.0 492.5,236.0 499.5,233.2 505.5,230.4 512.5,227.7 518.5,224.7 524.5,221.2 531.5,217.8 537.5,214.8 543.5,212.1 550.5,209.6 556.5,206.6 562.5,204.3 569.5,202.4 575.5,200.4 582.5,198.3 588.5,196.2 594.5,194.1 601.5,192.4 607.5,190.8 613.5,189.0 620.5,187.3 626.5,185.7 632.5,184.4 639.5,183.6 645.5,182.8 651.5,181.9 658.5,181.0 664.5,180.3 671.5,180.2 677.5,180.3 683.5,180.2 690.5,180.8 696.5,182.3 702.5,184.4 709.5,187.5 715.5,190.7 721.5,194.7 728.5,198.4 734.5,201.5 741.5,203.8 747.5,206.5 753.5,208.8 760.5,210.9 766.5,212.7 772.5,214.4 779.5,216.8 785.5,219.3 791.5,221.8 798.5,224.2 804.5,226.4 811.5,228.4 817.5,230.5 823.5,232.5" fill="none" stroke="#00ff00" stroke-width="1"/>
<polyline points="3.5,402.3 9.5,400.5 15.5,398.5 22.5,396.5 28.5,395.3 34.5,394.1 41.5,392.8 47.5,391.8 54.5,390.8 60.5,388.8 66.5,386.1 73.5,383.5 79.5,381.8 85.5,380.1 92.5,378.4 98.5,377.0 104.5,375.4 111.5,373.5 117.5,371.7 124.5,369.6 130.5,370.1 136.5,370.4 143.5,370.5 149.5,370.2 155.5,369.0 162.5,367.1 168.5,364.8 174.5,362.8 181.5,360.0 187.5,357.4 194.5,355.9 200.5,354.3 206.5,352.2 213.5,350.8 219.5,348.8 225.5,346.6 232.5,345.3 238.5,344.9 244.5,344.0 251.5,343.0 257.5,341.0 263.5,337.8 270.5,334.6 276.5,331.6 283.5,328.9 289.5,325.5 295.5,320.9 302.5,316.9 308.5,311.7 314.5,304.1 321.5,295.0 327.5,283.2 333.5,271.9 340.5,257.4 346.5,244.9 353.5,233.3 359.5,222.8 365.5,210.5 372.5,199.8 378.5,190.2 384.5,182.1 391.5,175.5 397.5,166.6 403.5,158.2 410.5,150.2 416.5,144.1 423.5,140.5 429.5,136.7 435.5,134.2 442.5,132.3 448.5,132.0 454.5,134.0 461.5,135.6 467.5,140.5 473.5,143.6 480.5,146.3 486.5,149.0 492.5,152.5 499.5,155.8 505.5,158.2 512.5,160.1 518.5,160.7 524.5,162.5 531.5,163.6 537.5,165.4 543.5,166.7 550.5,167.3 556.5,166.3 562.5,167.0 569.5,170.9 575.5,174.1 582.5,177.7 588.5,181.2 594.5,184.5 601.5,188.8 607.5,192.8 613.5,195.1 620.5,198.9 626.5,201.5 632.5,204.8 639.5,208.7 645.5,212.3 651.5,216.6 658.5,221.2 664.5,225.4 671.5,229.8 677.5,233.0 683.5,237.7 690.5,241.1 696.5,243.7 702.5,247.2 709.5,250.8 715.5,255.3 721.5,259.0 728.5,262.8 734.5,265.3 741.5,267.4 747.5,268.2 753.5,269.2 760.5,269.7 766.5,269.2 772.5,270.1 779.5,271.2 785.5,273.0 791.5,274.6 798.5,276.1 804.5,278.8 811.5,281.3 817.5,283.3 823.5,282.9" fill="none" stroke="#ff00ff" stroke-width="1"/>
<polyline points="3.5,395.0 9.5,389.5 15.5,385.5 22.5,384.0 28.5,382.6 34.5,381.5 41.5,380.2 47.5,379.0 54.5,377.8 60.5,377.3 66.5,378.4 73.5,378.9 79.5,378.8 85.5,377.8 92.5,375.8 98.5,374.3 104.5,371.3 111.5,368.1 117.5,364.1 124.5,361.9 130.5,361.8 136.5,362.0 143.5,362.1 149.5,362.6 155.5,362.1 162.5,359.9 168.5,358.3 174.5,357.6 181.5,355.9 187.5,352.9 194.5,350.1 200.5,346.7 206.5,342.4 213.5,338.9 219.5,335.5 225.5,333.4 232.5,332.3 238.5,332.2 244.5,332.1 251.5,333.1 257.5,332.0 263.5,328.9 270.5,326.8 276.5,324.2 283.5,322.4 289.5,317.7 295.5,309.4 302.5,301.7 308.5,291.3 314.5,275.2 321.5,258.0 327.5,237.5 333.5,216.9 340.5,190.6 346.5,167.5 353.5,148.8 359.5,136.2 365.5,119.4 372.5,108.2 378.5,105.2 384.5,106.1 391.5,113.5 397.5,116.2 403.5,125.8 410.5,132.8 416.5,139.4 423.5,144.8 429.5,154.0 435.5,160.1 442.5,159.4 448.5,157.9 454.5,154.6 461.5,154.9 467.5,155.2 473.5,154.3 480.5,153.2 486.5,153.2 492.5,150.9 499.5,151.6 505.5,156.9 512.5,162.2 518.5,166.8 524.5,170.0 531.5,171.9 537.5,176.5 543.5,180.2 550.5,181.4 556.5,181.6 562.5,182.5 569.5,184.8 575.5,186.0 582.5,188.6 588.5,192.5 594.5,197.1 601.5,201.1 607.5,205.4 613.5,208.8 620.5,216.1 626.5,220.5 632.5,224.8 639.5,231.4 645.5,236.0 651.5,240.8 658.5,245.3 664.5,249.8 671.5,254.2 677.5,257.1 683.5,259.2 690.5,261.8 696.5,262.5 702.5,263.0 709.5,265.5 715.5,269.9 721.5,272.7 728.5,275.8 734.5,276.4 741.5,277.7 747.5,277.1 753.5,276.6 760.5,276.9 766.5,275.4 772.5,274.6 779.5,272.5 785.5,273.3 791.5,273.4 798.5,275.9 804.5,280.0 811.5,285.4 817.5,290.0 823.5,288.9" fill="none" stroke="#ffff00" stroke-width="1"/>
<polyline points="3.5,388.0 9.5,381.0 15.5,374.0 22.5,371.0 28.5,369.3 34.5,375.5 41.5,380.3 47.5,382.0 54.5,385.1 60.5,385.4 66.5,381.4 73.5,377.6 79.5,375.7 85.5,370.6 92.5,366.3 98.5,367.3 104.5,364.9 111.5,360.4 117.5,357.6 124.5,357.5 130.5,356.3 136.5,359.0 143.5,363.8 149.5,367.7 155.5,366.7 162.5,363.4 168.5,357.6 174.5,351.3 181.5,344.2 187.5,339.0 194.5,336.7 200.5,335.8 206.5,333.4 213.5,333.6 219.5,332.1 225.5,330.0 232.5,328.8 238.5,331.0 244.5,330.6 251.5,334.2 257.5,333.9 263.5,329.0 270.5,322.7 276.5,317.8 283.5,310.6 289.5,301.4 295.5,289.9 302.5,280.7 308.5,264.7 314.5,239.8 321.5,214.6 327.5,185.1 333.5,153.1 340.5,116.6 346.5,95.2 353.5,83.0 359.5,87.4 365.5,85.6 372.5,99.9 378.5,115.2 384.5,129.2 391.5,139.6 397.5,146.8 403.5,151.6 410.5,150.5 416.5,149.6 423.5,149.9 429.5,161.2 435.5,168.6 442.5,168.4 448.5,166.1 454.5,159.3 461.5,148.7 467.5,141.9 473.5,140.3 480.5,140.2 486.5,147.2 492.5,153.2 499.5,161.3 505.5,173.6 512.5,184.2 518.5,186.3 524.5,186.8 531.5,182.5 537.5,179.4 543.5,176.2 550.5,176.5 556.5,176.4 562.5,182.5 569.5,190.3 575.5,195.8 582.5,200.8 588.5,208.5 594.5,211.7 601.5,211.8 607.5,215.0 613.5,216.9 620.5,223.7 626.5,229.3 632.5,237.8 639.5,247.8 645.5,255.2 651.5,257.9 658.5,261.3 664.5,261.8 671.5,260.7 677.5,259.0 683.5,260.6 690.5,262.3 696.5,263.3 702.5,265.4 709.5,272.1 715.5,279.2 721.5,283.2 728.5,288.2 734.5,287.4 741.5,283.3 747.5,275.0 753.5,270.0 760.5,265.6 766.5,263.5 772.5,265.9 779.5,270.0 785.5,276.6 791.5,281.1 798.5,288.3 804.5,294.1 811.5,300.9 817.5,303.5 823.5,296.7" fill="none" stroke="#ffffff" stroke-width="1"/>
<path d="M3 547h1v13h-1zM9 546h1v14h-1zM15 548h1v12h-1zM22 551h1v9h-1zM28 553h1v7h-1zM34 556h1v4h-1zM41 558h1v2h-1zM47 559h1v1h-1zM66 559h1v1h-1zM73 557h1v3h-1zM79 557h1v3h-1zM85 557h1v3h-1zM92 556h1v4h-1zM98 557h1v3h-1zM104 556h1v4h-1zM111 555h1v5h-1zM117 555h1v5h-1zM124 557h1v3h-1zM130 559h1v1h-1zM162 559h1v1h-1zM168 557h1v3h-1zM174 556h1v4h-1zM181 555h1v5h-1zM187 554h1v6h-1zM194 554h1v6h-1zM200 556h1v4h-1zM206 556h1v4h-1zM213 558h1v2h-1zM219 556h1v4h-1zM225 557h1v3h-1zM232 559h1v1h-1zM263 559h1v1h-1zM270 557h1v3h-1zM276 557h1v3h-1zM283 556h1v4h-1zM289 551h1v9h-1zM295 545h1v15h-1zM302 545h1v15h-1zM308 541h1v19h-1zM314 531h1v29h-1zM321 523h1v37h-1zM327 513h1v47h-1zM333 511h1v49h-1zM340 505h1v55h-1zM346 509h1v51h-1zM353 519h1v41h-1zM359 533h1v27h-1zM365 540h1v20h-1zM372 551h1v9h-1zM734 559h1v1h-1zM741 555h1v5h-1zM747 551h1v9h-1zM753 549h1v11h-1zM760 550h1v10h-1zM766 550h1v10h-1zM772 552h1v8h-1zM779 553h1v7h-1zM785 557h1v3h-1zM791 559h1v1h-1zM823 555h1v5h-1z" fill="#ff3232"/>
<path d="M54 559h1v1h-1zM60 559h1v1h-1zM136 559h1v1h-1zM143 559h1v4h-1zM149 559h1v5h-1zM155 559h1v2h-1zM238 559h1v1h-1zM244 559h1v3h-1zM251 559h1v3h-1zM257 559h1v2h-1zM378 559h1v3h-1zM384 559h1v14h-1zM391 559h1v23h-1zM397 559h1v20h-1zM403 559h1v21h-1zM410 559h1v21h-1zM416 559h1v23h-1zM423 559h1v27h-1zM429 559h1v31h-1zM435 559h1v31h-1zM442 559h1v23h-1zM448 559h1v19h-1zM454 559h1v15h-1zM461 559h1v11h-1zM467 559h1v12h-1zM473 559h1v9h-1zM480 559h1v10h-1zM486 559h1v15h-1zM492 559h1v16h-1zM499 559h1v20h-1zM505 559h1v22h-1zM512 559h1v23h-1zM518 559h1v21h-1zM524 559h1v15h-1zM531 559h1v11h-1zM537 559h1v10h-1zM543 559h1v10h-1zM550 559h1v10h-1zM556 559h1v5h-1zM562 559h1v9h-1zM569 559h1v13h-1zM575 559h1v13h-1zM582 559h1v13h-1zM588 559h1v10h-1zM594 559h1v10h-1zM601 559h1v10h-1zM607 559h1v10h-1zM613 559h1v9h-1zM620 559h1v11h-1zM626 559h1v11h-1zM632 559h1v13h-1zM639 559h1v17h-1zM645 559h1v13h-1zM651 559h1v10h-1zM658 559h1v9h-1zM664 559h1v6h-1zM671 559h1v6h-1zM677 559h1v3h-1zM683 559h1v1h-1zM690 559h1v1h-1zM702 559h1v3h-1zM709 559h1v3h-1zM715 559h1v5h-1zM721 559h1v3h-1zM728 559h1v3h-1zM798 559h1v2h-1zM804 559h1v3h-1zM811 559h1v4h-1zM817 559h1v4h-1z" fill="#54ffff"/>
<polyline points="3.5,560.1 9.5,558.2 15.5,555.8 22.5,553.5 28.5,551.6 34.5,551.0 41.5,550.6 47.5,550.6 54.5,550.6 60.5,550.6 66.5,550.0 73.5,549.4 79.5,548.8 85.5,548.2 92.5,548.2 98.5,547.0 104.5,545.9 111.5,545.4 117.5,544.3 124.5,544.3 130.5,543.6 136.5,544.3 143.5,544.3 149.5,545.4 155.5,546.4 162.5,546.4 168.5,545.4 174.5,544.2 181.5,543.2 187.5,542.0 194.5,541.1 200.5,540.4 206.5,539.3 213.5,539.0 219.5,538.3 225.5,538.3 232.5,537.5 238.5,538.3 244.5,538.8 251.5,539.3 257.5,539.4 263.5,539.2 270.5,538.4 276.5,538.4 283.5,537.3 289.5,534.3 295.5,532.2 302.5,528.9 308.5,524.4 314.5,518.2 321.5,511.8 327.5,504.3 333.5,493.1 340.5,481.3 346.5,472.1 353.5,464.2 359.5,458.3 365.5,454.3 372.5,452.4 378.5,453.3 384.5,456.5 391.5,460.4 397.5,464.4 403.5,469.1 410.5,473.0 416.5,478.0 423.5,483.7 429.5,489.3 435.5,496.0 442.5,501.3 448.5,505.2 454.5,507.8 461.5,509.6 467.5,511.5 473.5,513.9 480.5,515.5 486.5,517.8 492.5,521.3 499.5,525.3 505.5,530.7 512.5,533.7 518.5,539.6 524.5,542.7 531.5,544.5 537.5,546.7 543.5,548.5 550.5,550.4 556.5,551.3 562.5,553.1 569.5,556.3 575.5,559.9 582.5,561.7 588.5,564.0 594.5,566.2 601.5,568.3 607.5,570.3 613.5,572.6 620.5,575.4 626.5,577.3 632.5,580.1 639.5,583.4 645.5,586.2 651.5,588.6 658.5,590.3 664.5,591.9 671.5,593.5 677.5,593.5 683.5,593.5 690.5,593.4 696.5,593.4 702.5,594.5 709.5,594.7 715.5,595.6 721.5,596.6 728.5,597.3 734.5,596.9 741.5,595.4 747.5,594.0 753.5,591.7 760.5,589.6 766.5,588.1 772.5,586.8 779.5,585.3 785.5,584.3 791.5,584.1 798.5,584.6 804.5,585.6 811.5,586.5 817.5,587.2 823.5,586.0" fill="none" stroke="#ffff00" stroke-width="1"/>
<polyline points="3.5,552.7 9.5,550.2 15.5,549.1 22.5,548.3 28.5,548.3 34.5,549.5 41.5,549.5 47.5,550.3 54.5,550.8 60.5,550.6 66.5,549.5 73.5,548.3 79.5,547.8 85.5,547.0 92.5,545.9 98.5,544.8 104.5,544.3 111.5,543.3 117.5,542.5 124.5,542.5 130.5,543.3 136.5,544.3 143.5,545.7 149.5,548.2 155.5,547.5 162.5,545.9 168.5,543.8 174.5,542.2 181.5,541.1 187.5,539.3 194.5,538.6 200.5,538.6 206.5,537.5 213.5,538.6 219.5,537.5 225.5,536.5 232.5,537.2 238.5,539.3 244.5,540.4 251.5,541.4 257.5,540.2 263.5,538.4 270.5,537.6 276.5,536.3 283.5,535.3 289.5,532.2 295.5,524.6 302.5,521.1 308.5,516.5 314.5,505.6 321.5,494.4 327.5,481.3 333.5,470.8 340.5,455.7 346.5,446.8 353.5,443.6 359.5,445.5 365.5,444.6 372.5,448.1 378.5,455.4 384.5,462.9 391.5,472.4 397.5,474.1 403.5,477.8 410.5,482.0 416.5,488.3 423.5,496.4 429.5,505.0 435.5,511.3 442.5,512.6 448.5,513.9 454.5,514.5 461.5,515.7 467.5,517.4 473.5,518.7 480.5,520.5 486.5,526.2 492.5,529.6 499.5,536.6 505.5,542.0 512.5,546.5 518.5,549.3 524.5,550.4 531.5,550.4 537.5,552.2 543.5,553.9 550.5,555.6 556.5,555.8 562.5,557.8 569.5,562.2 575.5,565.8 582.5,568.0 588.5,569.4 594.5,571.2 601.5,573.0 607.5,575.3 613.5,577.1 620.5,580.2 626.5,582.9 632.5,587.1 639.5,592.3 645.5,593.3 651.5,593.3 658.5,594.7 664.5,595.3 671.5,596.3 677.5,594.2 683.5,594.4 690.5,594.2 696.5,594.2 702.5,595.4 709.5,596.9 715.5,598.3 721.5,598.3 728.5,598.3 734.5,596.6 741.5,593.1 747.5,588.9 753.5,586.5 760.5,585.1 766.5,583.2 772.5,582.3 779.5,581.5 785.5,583.0 791.5,584.3 798.5,584.9 804.5,586.2 811.5,587.9 817.5,589.3 823.5,584.3" fill="none" stroke="#ffffff" stroke-width="1"/>
<path d="M53 552h2v6h-2z" fill="#00e600"/><path d="M49 558h10l-5 6z" fill="#00e600" shape-rendering="auto"/>
<path d="M65 558h2v6h-2z" fill="#ff0000"/><path d="M61 558h10l-5 -6z" fill="#ff0000" shape-rendering="auto"/>
<path d="M135 546h2v6h-2z" fill="#00e600"/><path d="M131 552h10l-5 6z" fill="#00e600" shape-rendering="auto"/>
<path d="M161 554h2v6h-2z" fill="#ff0000"/><path d="M157 554h10l-5 -6z" fill="#ff0000" shape-rendering="auto"/>
<path d="M237 540h2v6h-2z" fill="#00e600"/><path d="M233 546h10l-5 6z" fill="#00e600" shape-rendering="auto"/>
<path d="M262 547h2v6h-2z" fill="#ff0000"/><path d="M258 547h10l-5 -6z" fill="#ff0000" shape-rendering="auto"/>
<path d="M377 454h2v7h-2z" fill="#00e600"/><path d="M373 461h10l-5 6z" fill="#00e600" shape-rendering="auto"/>
<path d="M733 604h2v8h-2z" fill="#ff0000"/><path d="M729 604h10l-5 -6z" fill="#ff0000" shape-rendering="auto"/>
<path d="M797 586h2v6h-2z" fill="#00e600"/><path d="M793 592h10l-5 6z" fill="#00e600" shape-rendering="auto"/>
<path d="M822 594h2v6h-2z" fill="#ff0000"/><path d="M818 594h10l-5 -6z" fill="#ff0000" shape-rendering="auto"/>
<path d="M8 19h2v2h-2zM14 19h2v2h-2zM21 19h2v2h-2zM59 19h2v2h-2zM84 19h2v2h-2zM91 19h2v2h-2zM97 19h2v2h-2zM103 19h2v2h-2zM116 19h2v2h-2zM148 19h2v2h-2zM154 19h2v2h-2zM186 19h2v2h-2zM205 19h2v2h-2zM358 19h2v2h-2zM422 19h2v2h-2zM485 19h2v2h-2zM517 19h2v2h-2zM542 19h2v2h-2zM555 19h2v2h-2zM587 19h2v2h-2zM676 19h2v2h-2zM682 19h2v2h-2zM778 19h2v2h-2zM822 19h2v2h-2z" fill="#ff00ff"/>
<g shape-rendering="auto">
<circle cx="134" cy="10" r="6" fill="#8c8c8c"/>
<polyline points="131,8.5 134,11.5 137,8.5" fill="none" stroke="#111" stroke-width="1.4"/>
<circle cx="8" cy="431" r="6" fill="#8c8c8c"/>
<polyline points="5,429.5 8,432.5 11,429.5" fill="none" stroke="#111" stroke-width="1.4"/>
<path d="M818.4 5.3 L823.6 10.5 L818.4 15.7 L813.2 10.5 Z" fill="none" stroke="#808080" stroke-width="1"/>
<rect x="832" y="6" width="10" height="9.2" rx="2.5" fill="none" stroke="#6e6e6e" stroke-width="1.5"/>
<rect x="838.2" y="7.3" width="2.5" height="6.5" fill="#7a7a7a"/>
<path d="M347 21.5 H350.5 M346.5 21 V24.5 M347.5 22.5 L351 23.5 L353 24 L355 24.5 L357.5 25.5" fill="none" stroke="#c8c8c8" stroke-width="1"/>
<path d="M60.5 402.5 H71.5 M60.5 402.5 L63.5 399.5 M60.5 402.5 L63.5 405.5" fill="none" stroke="#c8c8c8" stroke-width="1"/>
</g>
<path d="M185 409h1v1h-1zM185 410h1v1h-1zM184 411h3v1h-3zM183 412h5v1h-5zM184 414h4v1h-4zM183 415h2v1h-2zM188 415h1v1h-1zM183 416h2v1h-2zM184 417h4v1h-4zM187 418h2v1h-2zM183 419h1v1h-1zM187 419h2v1h-2zM183 420h5v1h-5z" fill="#ff0000"/>
<rect x="543" y="408" width="13" height="13" fill="#0a3c7c"/>
<rect x="671" y="408" width="13" height="13" fill="#0a800a"/>
</svg>
<div class="t" style="left:2px;top:0px;color:#d8d8d8;filter:url(#crispc);">永吉股份(日线.前复权)</div>
<div class="t" style="left:144px;top:0px;color:#ffffff;font-size:12px;letter-spacing:-0.3px;">MA5: 8.38</div>
<div class="t" style="left:202px;top:0px;color:#ffff00;font-size:12px;letter-spacing:-0.3px;">MA10: 8.51</div>
<div class="t" style="left:267px;top:0px;color:#ff00ff;font-size:12px;letter-spacing:-0.3px;">MA20: 8.61</div>
<div class="t" style="left:332px;top:0px;color:#00ff00;font-size:12px;letter-spacing:-0.3px;">MA60: 9.45</div>
<div class="t" style="left:360px;top:17px;color:#c8c8c8;">12.96</div>
<div class="t" style="left:73px;top:394px;color:#c8c8c8;">6.62</div>
<div class="t" style="left:543px;top:405px;color:#ffffff;font-size:12px;filter:url(#crispc);">财</div>
<div class="t" style="left:671px;top:405px;color:#ffffff;font-size:12px;filter:url(#crispc);">减</div>
<div class="t" style="left:18px;top:420.5px;color:#d8d8d8;filter:url(#crispc);">新MACD</div>
<div class="t" style="left:69px;top:421px;color:#ffffff;">DIF: -0.24</div>
<div class="t" style="left:127px;top:421px;color:#ffff00;">DEA: -0.26</div>
<div class="t" style="left:190px;top:421px;color:#ff00ff;">MACD: 0.05</div>
<div class="t" style="left:823px;top:586px;color:#ffff00;filter:url(#crispc);">底背</div>
</body></html>
